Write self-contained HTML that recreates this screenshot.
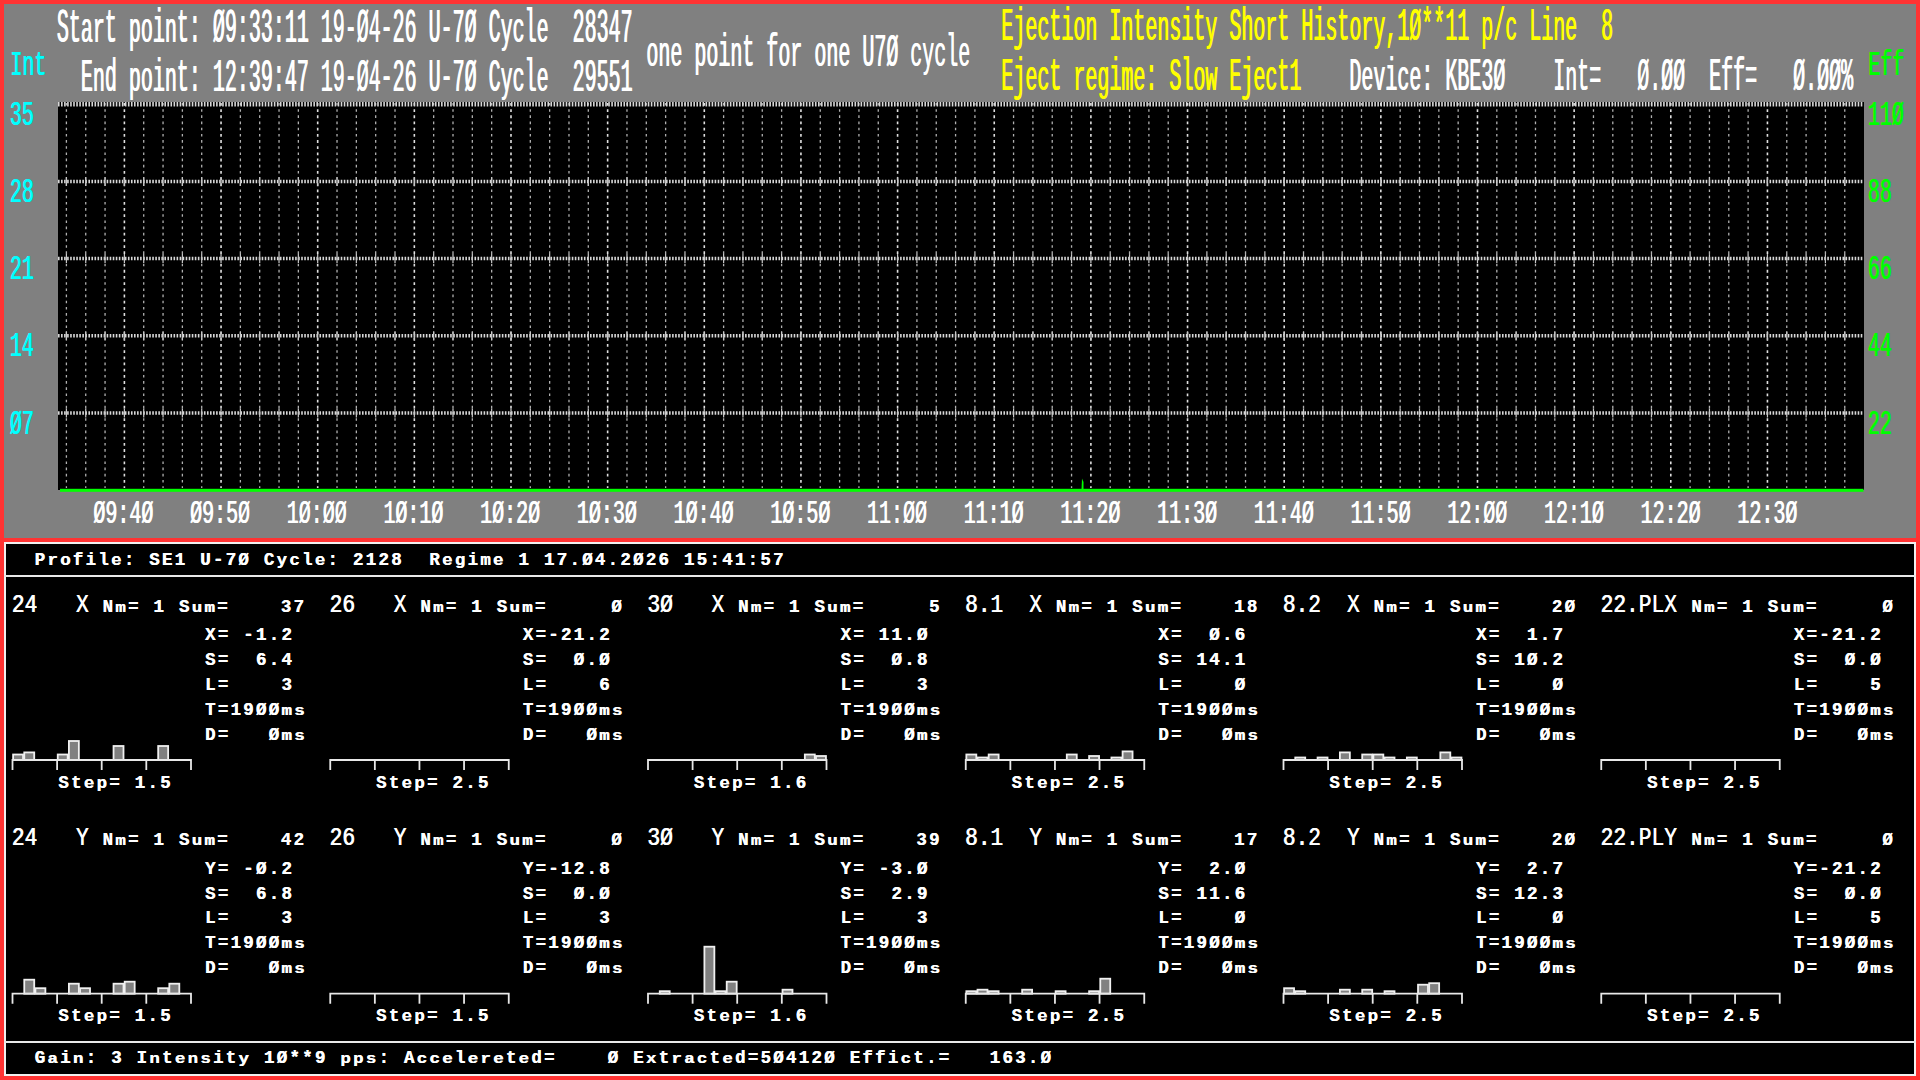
<!DOCTYPE html>
<html><head><meta charset="utf-8"><style>
html,body{margin:0;padding:0;width:1920px;height:1080px;overflow:hidden;background:#ff3333;}
.lc{display:inline-block;}
.t{position:absolute;white-space:pre;font-family:"Liberation Mono",monospace;transform-origin:0 0;}
#top{position:absolute;left:4px;top:4px;width:1912px;height:533.6px;background:#808080;}
#chart{position:absolute;left:58px;top:102px;width:1805.5px;height:388px;background:#000;}
#low{position:absolute;left:4px;top:542px;width:1908px;height:530px;border:2px solid #f0f0f0;background:#000;}
.sep{position:absolute;left:4px;width:1912px;height:2px;background:#e8e8e8;}
svg{position:absolute;left:0;top:0;}
.vd{stroke:#b0b0b0;stroke-width:1.3;stroke-dasharray:2.6 3.58;}
.vdb{stroke:#e0e0e0;stroke-width:1.6;stroke-dasharray:2.8 3.38;}
.im{stroke:#c8c8c8;stroke-width:1.2;}
.hd{stroke:#d8d8d8;stroke-width:3.5;stroke-dasharray:1.6 1.44;}
.bar{fill:#808080;stroke:#f0f0f0;stroke-width:1.8;}
.ax{fill:none;stroke:#e8e8e8;stroke-width:1.8;}
</style></head><body>
<div id="top"></div>
<div id="chart"></div>
<div id="low"></div>
<div class="sep" style="top:575px"></div>
<div class="sep" style="top:1041px"></div>
<svg width="1920" height="1080" viewBox="0 0 1920 1080">
<line x1="66.40" y1="103" x2="66.40" y2="488" class="vd"/><line x1="85.73" y1="103" x2="85.73" y2="488" class="vd"/><line x1="105.06" y1="103" x2="105.06" y2="488" class="vd"/><line x1="124.39" y1="103" x2="124.39" y2="488" class="vdb"/><line x1="143.72" y1="103" x2="143.72" y2="488" class="vd"/><line x1="163.05" y1="103" x2="163.05" y2="488" class="vd"/><line x1="182.38" y1="103" x2="182.38" y2="488" class="vd"/><line x1="201.71" y1="103" x2="201.71" y2="488" class="vd"/><line x1="221.04" y1="103" x2="221.04" y2="488" class="vdb"/><line x1="240.37" y1="103" x2="240.37" y2="488" class="vd"/><line x1="259.70" y1="103" x2="259.70" y2="488" class="vd"/><line x1="279.03" y1="103" x2="279.03" y2="488" class="vd"/><line x1="298.36" y1="103" x2="298.36" y2="488" class="vd"/><line x1="317.69" y1="103" x2="317.69" y2="488" class="vdb"/><line x1="337.02" y1="103" x2="337.02" y2="488" class="vd"/><line x1="356.35" y1="103" x2="356.35" y2="488" class="vd"/><line x1="375.68" y1="103" x2="375.68" y2="488" class="vd"/><line x1="395.01" y1="103" x2="395.01" y2="488" class="vd"/><line x1="414.34" y1="103" x2="414.34" y2="488" class="vdb"/><line x1="433.67" y1="103" x2="433.67" y2="488" class="vd"/><line x1="453.00" y1="103" x2="453.00" y2="488" class="vd"/><line x1="472.33" y1="103" x2="472.33" y2="488" class="vd"/><line x1="491.66" y1="103" x2="491.66" y2="488" class="vd"/><line x1="510.99" y1="103" x2="510.99" y2="488" class="vdb"/><line x1="530.32" y1="103" x2="530.32" y2="488" class="vd"/><line x1="549.65" y1="103" x2="549.65" y2="488" class="vd"/><line x1="568.98" y1="103" x2="568.98" y2="488" class="vd"/><line x1="588.31" y1="103" x2="588.31" y2="488" class="vd"/><line x1="607.64" y1="103" x2="607.64" y2="488" class="vdb"/><line x1="626.97" y1="103" x2="626.97" y2="488" class="vd"/><line x1="646.30" y1="103" x2="646.30" y2="488" class="vd"/><line x1="665.63" y1="103" x2="665.63" y2="488" class="vd"/><line x1="684.96" y1="103" x2="684.96" y2="488" class="vd"/><line x1="704.29" y1="103" x2="704.29" y2="488" class="vdb"/><line x1="723.62" y1="103" x2="723.62" y2="488" class="vd"/><line x1="742.95" y1="103" x2="742.95" y2="488" class="vd"/><line x1="762.28" y1="103" x2="762.28" y2="488" class="vd"/><line x1="781.61" y1="103" x2="781.61" y2="488" class="vd"/><line x1="800.94" y1="103" x2="800.94" y2="488" class="vdb"/><line x1="820.27" y1="103" x2="820.27" y2="488" class="vd"/><line x1="839.60" y1="103" x2="839.60" y2="488" class="vd"/><line x1="858.93" y1="103" x2="858.93" y2="488" class="vd"/><line x1="878.26" y1="103" x2="878.26" y2="488" class="vd"/><line x1="897.59" y1="103" x2="897.59" y2="488" class="vdb"/><line x1="916.92" y1="103" x2="916.92" y2="488" class="vd"/><line x1="936.25" y1="103" x2="936.25" y2="488" class="vd"/><line x1="955.58" y1="103" x2="955.58" y2="488" class="vd"/><line x1="974.91" y1="103" x2="974.91" y2="488" class="vd"/><line x1="994.24" y1="103" x2="994.24" y2="488" class="vdb"/><line x1="1013.57" y1="103" x2="1013.57" y2="488" class="vd"/><line x1="1032.90" y1="103" x2="1032.90" y2="488" class="vd"/><line x1="1052.23" y1="103" x2="1052.23" y2="488" class="vd"/><line x1="1071.56" y1="103" x2="1071.56" y2="488" class="vd"/><line x1="1090.89" y1="103" x2="1090.89" y2="488" class="vdb"/><line x1="1110.22" y1="103" x2="1110.22" y2="488" class="vd"/><line x1="1129.55" y1="103" x2="1129.55" y2="488" class="vd"/><line x1="1148.88" y1="103" x2="1148.88" y2="488" class="vd"/><line x1="1168.21" y1="103" x2="1168.21" y2="488" class="vd"/><line x1="1187.54" y1="103" x2="1187.54" y2="488" class="vdb"/><line x1="1206.87" y1="103" x2="1206.87" y2="488" class="vd"/><line x1="1226.20" y1="103" x2="1226.20" y2="488" class="vd"/><line x1="1245.53" y1="103" x2="1245.53" y2="488" class="vd"/><line x1="1264.86" y1="103" x2="1264.86" y2="488" class="vd"/><line x1="1284.19" y1="103" x2="1284.19" y2="488" class="vdb"/><line x1="1303.52" y1="103" x2="1303.52" y2="488" class="vd"/><line x1="1322.85" y1="103" x2="1322.85" y2="488" class="vd"/><line x1="1342.18" y1="103" x2="1342.18" y2="488" class="vd"/><line x1="1361.51" y1="103" x2="1361.51" y2="488" class="vd"/><line x1="1380.84" y1="103" x2="1380.84" y2="488" class="vdb"/><line x1="1400.17" y1="103" x2="1400.17" y2="488" class="vd"/><line x1="1419.50" y1="103" x2="1419.50" y2="488" class="vd"/><line x1="1438.83" y1="103" x2="1438.83" y2="488" class="vd"/><line x1="1458.16" y1="103" x2="1458.16" y2="488" class="vd"/><line x1="1477.49" y1="103" x2="1477.49" y2="488" class="vdb"/><line x1="1496.82" y1="103" x2="1496.82" y2="488" class="vd"/><line x1="1516.15" y1="103" x2="1516.15" y2="488" class="vd"/><line x1="1535.48" y1="103" x2="1535.48" y2="488" class="vd"/><line x1="1554.81" y1="103" x2="1554.81" y2="488" class="vd"/><line x1="1574.14" y1="103" x2="1574.14" y2="488" class="vdb"/><line x1="1593.47" y1="103" x2="1593.47" y2="488" class="vd"/><line x1="1612.80" y1="103" x2="1612.80" y2="488" class="vd"/><line x1="1632.13" y1="103" x2="1632.13" y2="488" class="vd"/><line x1="1651.46" y1="103" x2="1651.46" y2="488" class="vd"/><line x1="1670.79" y1="103" x2="1670.79" y2="488" class="vdb"/><line x1="1690.12" y1="103" x2="1690.12" y2="488" class="vd"/><line x1="1709.45" y1="103" x2="1709.45" y2="488" class="vd"/><line x1="1728.78" y1="103" x2="1728.78" y2="488" class="vd"/><line x1="1748.11" y1="103" x2="1748.11" y2="488" class="vd"/><line x1="1767.44" y1="103" x2="1767.44" y2="488" class="vdb"/><line x1="1786.77" y1="103" x2="1786.77" y2="488" class="vd"/><line x1="1806.10" y1="103" x2="1806.10" y2="488" class="vd"/><line x1="1825.43" y1="103" x2="1825.43" y2="488" class="vd"/><line x1="1844.76" y1="103" x2="1844.76" y2="488" class="vd"/><line x1="58" y1="104.20" x2="1863.5" y2="104.20" class="hd" style="stroke-width:4.5"/><line x1="58" y1="181.40" x2="1863.5" y2="181.40" class="hd"/><line x1="58" y1="258.60" x2="1863.5" y2="258.60" class="hd"/><line x1="58" y1="335.80" x2="1863.5" y2="335.80" class="hd"/><line x1="58" y1="413.00" x2="1863.5" y2="413.00" class="hd"/><line x1="66.40" y1="176.90" x2="66.40" y2="185.90" class="im"/><line x1="85.73" y1="176.90" x2="85.73" y2="185.90" class="im"/><line x1="105.06" y1="176.90" x2="105.06" y2="185.90" class="im"/><line x1="124.39" y1="176.90" x2="124.39" y2="185.90" class="im"/><line x1="143.72" y1="176.90" x2="143.72" y2="185.90" class="im"/><line x1="163.05" y1="176.90" x2="163.05" y2="185.90" class="im"/><line x1="182.38" y1="176.90" x2="182.38" y2="185.90" class="im"/><line x1="201.71" y1="176.90" x2="201.71" y2="185.90" class="im"/><line x1="221.04" y1="176.90" x2="221.04" y2="185.90" class="im"/><line x1="240.37" y1="176.90" x2="240.37" y2="185.90" class="im"/><line x1="259.70" y1="176.90" x2="259.70" y2="185.90" class="im"/><line x1="279.03" y1="176.90" x2="279.03" y2="185.90" class="im"/><line x1="298.36" y1="176.90" x2="298.36" y2="185.90" class="im"/><line x1="317.69" y1="176.90" x2="317.69" y2="185.90" class="im"/><line x1="337.02" y1="176.90" x2="337.02" y2="185.90" class="im"/><line x1="356.35" y1="176.90" x2="356.35" y2="185.90" class="im"/><line x1="375.68" y1="176.90" x2="375.68" y2="185.90" class="im"/><line x1="395.01" y1="176.90" x2="395.01" y2="185.90" class="im"/><line x1="414.34" y1="176.90" x2="414.34" y2="185.90" class="im"/><line x1="433.67" y1="176.90" x2="433.67" y2="185.90" class="im"/><line x1="453.00" y1="176.90" x2="453.00" y2="185.90" class="im"/><line x1="472.33" y1="176.90" x2="472.33" y2="185.90" class="im"/><line x1="491.66" y1="176.90" x2="491.66" y2="185.90" class="im"/><line x1="510.99" y1="176.90" x2="510.99" y2="185.90" class="im"/><line x1="530.32" y1="176.90" x2="530.32" y2="185.90" class="im"/><line x1="549.65" y1="176.90" x2="549.65" y2="185.90" class="im"/><line x1="568.98" y1="176.90" x2="568.98" y2="185.90" class="im"/><line x1="588.31" y1="176.90" x2="588.31" y2="185.90" class="im"/><line x1="607.64" y1="176.90" x2="607.64" y2="185.90" class="im"/><line x1="626.97" y1="176.90" x2="626.97" y2="185.90" class="im"/><line x1="646.30" y1="176.90" x2="646.30" y2="185.90" class="im"/><line x1="665.63" y1="176.90" x2="665.63" y2="185.90" class="im"/><line x1="684.96" y1="176.90" x2="684.96" y2="185.90" class="im"/><line x1="704.29" y1="176.90" x2="704.29" y2="185.90" class="im"/><line x1="723.62" y1="176.90" x2="723.62" y2="185.90" class="im"/><line x1="742.95" y1="176.90" x2="742.95" y2="185.90" class="im"/><line x1="762.28" y1="176.90" x2="762.28" y2="185.90" class="im"/><line x1="781.61" y1="176.90" x2="781.61" y2="185.90" class="im"/><line x1="800.94" y1="176.90" x2="800.94" y2="185.90" class="im"/><line x1="820.27" y1="176.90" x2="820.27" y2="185.90" class="im"/><line x1="839.60" y1="176.90" x2="839.60" y2="185.90" class="im"/><line x1="858.93" y1="176.90" x2="858.93" y2="185.90" class="im"/><line x1="878.26" y1="176.90" x2="878.26" y2="185.90" class="im"/><line x1="897.59" y1="176.90" x2="897.59" y2="185.90" class="im"/><line x1="916.92" y1="176.90" x2="916.92" y2="185.90" class="im"/><line x1="936.25" y1="176.90" x2="936.25" y2="185.90" class="im"/><line x1="955.58" y1="176.90" x2="955.58" y2="185.90" class="im"/><line x1="974.91" y1="176.90" x2="974.91" y2="185.90" class="im"/><line x1="994.24" y1="176.90" x2="994.24" y2="185.90" class="im"/><line x1="1013.57" y1="176.90" x2="1013.57" y2="185.90" class="im"/><line x1="1032.90" y1="176.90" x2="1032.90" y2="185.90" class="im"/><line x1="1052.23" y1="176.90" x2="1052.23" y2="185.90" class="im"/><line x1="1071.56" y1="176.90" x2="1071.56" y2="185.90" class="im"/><line x1="1090.89" y1="176.90" x2="1090.89" y2="185.90" class="im"/><line x1="1110.22" y1="176.90" x2="1110.22" y2="185.90" class="im"/><line x1="1129.55" y1="176.90" x2="1129.55" y2="185.90" class="im"/><line x1="1148.88" y1="176.90" x2="1148.88" y2="185.90" class="im"/><line x1="1168.21" y1="176.90" x2="1168.21" y2="185.90" class="im"/><line x1="1187.54" y1="176.90" x2="1187.54" y2="185.90" class="im"/><line x1="1206.87" y1="176.90" x2="1206.87" y2="185.90" class="im"/><line x1="1226.20" y1="176.90" x2="1226.20" y2="185.90" class="im"/><line x1="1245.53" y1="176.90" x2="1245.53" y2="185.90" class="im"/><line x1="1264.86" y1="176.90" x2="1264.86" y2="185.90" class="im"/><line x1="1284.19" y1="176.90" x2="1284.19" y2="185.90" class="im"/><line x1="1303.52" y1="176.90" x2="1303.52" y2="185.90" class="im"/><line x1="1322.85" y1="176.90" x2="1322.85" y2="185.90" class="im"/><line x1="1342.18" y1="176.90" x2="1342.18" y2="185.90" class="im"/><line x1="1361.51" y1="176.90" x2="1361.51" y2="185.90" class="im"/><line x1="1380.84" y1="176.90" x2="1380.84" y2="185.90" class="im"/><line x1="1400.17" y1="176.90" x2="1400.17" y2="185.90" class="im"/><line x1="1419.50" y1="176.90" x2="1419.50" y2="185.90" class="im"/><line x1="1438.83" y1="176.90" x2="1438.83" y2="185.90" class="im"/><line x1="1458.16" y1="176.90" x2="1458.16" y2="185.90" class="im"/><line x1="1477.49" y1="176.90" x2="1477.49" y2="185.90" class="im"/><line x1="1496.82" y1="176.90" x2="1496.82" y2="185.90" class="im"/><line x1="1516.15" y1="176.90" x2="1516.15" y2="185.90" class="im"/><line x1="1535.48" y1="176.90" x2="1535.48" y2="185.90" class="im"/><line x1="1554.81" y1="176.90" x2="1554.81" y2="185.90" class="im"/><line x1="1574.14" y1="176.90" x2="1574.14" y2="185.90" class="im"/><line x1="1593.47" y1="176.90" x2="1593.47" y2="185.90" class="im"/><line x1="1612.80" y1="176.90" x2="1612.80" y2="185.90" class="im"/><line x1="1632.13" y1="176.90" x2="1632.13" y2="185.90" class="im"/><line x1="1651.46" y1="176.90" x2="1651.46" y2="185.90" class="im"/><line x1="1670.79" y1="176.90" x2="1670.79" y2="185.90" class="im"/><line x1="1690.12" y1="176.90" x2="1690.12" y2="185.90" class="im"/><line x1="1709.45" y1="176.90" x2="1709.45" y2="185.90" class="im"/><line x1="1728.78" y1="176.90" x2="1728.78" y2="185.90" class="im"/><line x1="1748.11" y1="176.90" x2="1748.11" y2="185.90" class="im"/><line x1="1767.44" y1="176.90" x2="1767.44" y2="185.90" class="im"/><line x1="1786.77" y1="176.90" x2="1786.77" y2="185.90" class="im"/><line x1="1806.10" y1="176.90" x2="1806.10" y2="185.90" class="im"/><line x1="1825.43" y1="176.90" x2="1825.43" y2="185.90" class="im"/><line x1="1844.76" y1="176.90" x2="1844.76" y2="185.90" class="im"/><line x1="66.40" y1="254.10" x2="66.40" y2="263.10" class="im"/><line x1="85.73" y1="254.10" x2="85.73" y2="263.10" class="im"/><line x1="105.06" y1="254.10" x2="105.06" y2="263.10" class="im"/><line x1="124.39" y1="254.10" x2="124.39" y2="263.10" class="im"/><line x1="143.72" y1="254.10" x2="143.72" y2="263.10" class="im"/><line x1="163.05" y1="254.10" x2="163.05" y2="263.10" class="im"/><line x1="182.38" y1="254.10" x2="182.38" y2="263.10" class="im"/><line x1="201.71" y1="254.10" x2="201.71" y2="263.10" class="im"/><line x1="221.04" y1="254.10" x2="221.04" y2="263.10" class="im"/><line x1="240.37" y1="254.10" x2="240.37" y2="263.10" class="im"/><line x1="259.70" y1="254.10" x2="259.70" y2="263.10" class="im"/><line x1="279.03" y1="254.10" x2="279.03" y2="263.10" class="im"/><line x1="298.36" y1="254.10" x2="298.36" y2="263.10" class="im"/><line x1="317.69" y1="254.10" x2="317.69" y2="263.10" class="im"/><line x1="337.02" y1="254.10" x2="337.02" y2="263.10" class="im"/><line x1="356.35" y1="254.10" x2="356.35" y2="263.10" class="im"/><line x1="375.68" y1="254.10" x2="375.68" y2="263.10" class="im"/><line x1="395.01" y1="254.10" x2="395.01" y2="263.10" class="im"/><line x1="414.34" y1="254.10" x2="414.34" y2="263.10" class="im"/><line x1="433.67" y1="254.10" x2="433.67" y2="263.10" class="im"/><line x1="453.00" y1="254.10" x2="453.00" y2="263.10" class="im"/><line x1="472.33" y1="254.10" x2="472.33" y2="263.10" class="im"/><line x1="491.66" y1="254.10" x2="491.66" y2="263.10" class="im"/><line x1="510.99" y1="254.10" x2="510.99" y2="263.10" class="im"/><line x1="530.32" y1="254.10" x2="530.32" y2="263.10" class="im"/><line x1="549.65" y1="254.10" x2="549.65" y2="263.10" class="im"/><line x1="568.98" y1="254.10" x2="568.98" y2="263.10" class="im"/><line x1="588.31" y1="254.10" x2="588.31" y2="263.10" class="im"/><line x1="607.64" y1="254.10" x2="607.64" y2="263.10" class="im"/><line x1="626.97" y1="254.10" x2="626.97" y2="263.10" class="im"/><line x1="646.30" y1="254.10" x2="646.30" y2="263.10" class="im"/><line x1="665.63" y1="254.10" x2="665.63" y2="263.10" class="im"/><line x1="684.96" y1="254.10" x2="684.96" y2="263.10" class="im"/><line x1="704.29" y1="254.10" x2="704.29" y2="263.10" class="im"/><line x1="723.62" y1="254.10" x2="723.62" y2="263.10" class="im"/><line x1="742.95" y1="254.10" x2="742.95" y2="263.10" class="im"/><line x1="762.28" y1="254.10" x2="762.28" y2="263.10" class="im"/><line x1="781.61" y1="254.10" x2="781.61" y2="263.10" class="im"/><line x1="800.94" y1="254.10" x2="800.94" y2="263.10" class="im"/><line x1="820.27" y1="254.10" x2="820.27" y2="263.10" class="im"/><line x1="839.60" y1="254.10" x2="839.60" y2="263.10" class="im"/><line x1="858.93" y1="254.10" x2="858.93" y2="263.10" class="im"/><line x1="878.26" y1="254.10" x2="878.26" y2="263.10" class="im"/><line x1="897.59" y1="254.10" x2="897.59" y2="263.10" class="im"/><line x1="916.92" y1="254.10" x2="916.92" y2="263.10" class="im"/><line x1="936.25" y1="254.10" x2="936.25" y2="263.10" class="im"/><line x1="955.58" y1="254.10" x2="955.58" y2="263.10" class="im"/><line x1="974.91" y1="254.10" x2="974.91" y2="263.10" class="im"/><line x1="994.24" y1="254.10" x2="994.24" y2="263.10" class="im"/><line x1="1013.57" y1="254.10" x2="1013.57" y2="263.10" class="im"/><line x1="1032.90" y1="254.10" x2="1032.90" y2="263.10" class="im"/><line x1="1052.23" y1="254.10" x2="1052.23" y2="263.10" class="im"/><line x1="1071.56" y1="254.10" x2="1071.56" y2="263.10" class="im"/><line x1="1090.89" y1="254.10" x2="1090.89" y2="263.10" class="im"/><line x1="1110.22" y1="254.10" x2="1110.22" y2="263.10" class="im"/><line x1="1129.55" y1="254.10" x2="1129.55" y2="263.10" class="im"/><line x1="1148.88" y1="254.10" x2="1148.88" y2="263.10" class="im"/><line x1="1168.21" y1="254.10" x2="1168.21" y2="263.10" class="im"/><line x1="1187.54" y1="254.10" x2="1187.54" y2="263.10" class="im"/><line x1="1206.87" y1="254.10" x2="1206.87" y2="263.10" class="im"/><line x1="1226.20" y1="254.10" x2="1226.20" y2="263.10" class="im"/><line x1="1245.53" y1="254.10" x2="1245.53" y2="263.10" class="im"/><line x1="1264.86" y1="254.10" x2="1264.86" y2="263.10" class="im"/><line x1="1284.19" y1="254.10" x2="1284.19" y2="263.10" class="im"/><line x1="1303.52" y1="254.10" x2="1303.52" y2="263.10" class="im"/><line x1="1322.85" y1="254.10" x2="1322.85" y2="263.10" class="im"/><line x1="1342.18" y1="254.10" x2="1342.18" y2="263.10" class="im"/><line x1="1361.51" y1="254.10" x2="1361.51" y2="263.10" class="im"/><line x1="1380.84" y1="254.10" x2="1380.84" y2="263.10" class="im"/><line x1="1400.17" y1="254.10" x2="1400.17" y2="263.10" class="im"/><line x1="1419.50" y1="254.10" x2="1419.50" y2="263.10" class="im"/><line x1="1438.83" y1="254.10" x2="1438.83" y2="263.10" class="im"/><line x1="1458.16" y1="254.10" x2="1458.16" y2="263.10" class="im"/><line x1="1477.49" y1="254.10" x2="1477.49" y2="263.10" class="im"/><line x1="1496.82" y1="254.10" x2="1496.82" y2="263.10" class="im"/><line x1="1516.15" y1="254.10" x2="1516.15" y2="263.10" class="im"/><line x1="1535.48" y1="254.10" x2="1535.48" y2="263.10" class="im"/><line x1="1554.81" y1="254.10" x2="1554.81" y2="263.10" class="im"/><line x1="1574.14" y1="254.10" x2="1574.14" y2="263.10" class="im"/><line x1="1593.47" y1="254.10" x2="1593.47" y2="263.10" class="im"/><line x1="1612.80" y1="254.10" x2="1612.80" y2="263.10" class="im"/><line x1="1632.13" y1="254.10" x2="1632.13" y2="263.10" class="im"/><line x1="1651.46" y1="254.10" x2="1651.46" y2="263.10" class="im"/><line x1="1670.79" y1="254.10" x2="1670.79" y2="263.10" class="im"/><line x1="1690.12" y1="254.10" x2="1690.12" y2="263.10" class="im"/><line x1="1709.45" y1="254.10" x2="1709.45" y2="263.10" class="im"/><line x1="1728.78" y1="254.10" x2="1728.78" y2="263.10" class="im"/><line x1="1748.11" y1="254.10" x2="1748.11" y2="263.10" class="im"/><line x1="1767.44" y1="254.10" x2="1767.44" y2="263.10" class="im"/><line x1="1786.77" y1="254.10" x2="1786.77" y2="263.10" class="im"/><line x1="1806.10" y1="254.10" x2="1806.10" y2="263.10" class="im"/><line x1="1825.43" y1="254.10" x2="1825.43" y2="263.10" class="im"/><line x1="1844.76" y1="254.10" x2="1844.76" y2="263.10" class="im"/><line x1="66.40" y1="331.30" x2="66.40" y2="340.30" class="im"/><line x1="85.73" y1="331.30" x2="85.73" y2="340.30" class="im"/><line x1="105.06" y1="331.30" x2="105.06" y2="340.30" class="im"/><line x1="124.39" y1="331.30" x2="124.39" y2="340.30" class="im"/><line x1="143.72" y1="331.30" x2="143.72" y2="340.30" class="im"/><line x1="163.05" y1="331.30" x2="163.05" y2="340.30" class="im"/><line x1="182.38" y1="331.30" x2="182.38" y2="340.30" class="im"/><line x1="201.71" y1="331.30" x2="201.71" y2="340.30" class="im"/><line x1="221.04" y1="331.30" x2="221.04" y2="340.30" class="im"/><line x1="240.37" y1="331.30" x2="240.37" y2="340.30" class="im"/><line x1="259.70" y1="331.30" x2="259.70" y2="340.30" class="im"/><line x1="279.03" y1="331.30" x2="279.03" y2="340.30" class="im"/><line x1="298.36" y1="331.30" x2="298.36" y2="340.30" class="im"/><line x1="317.69" y1="331.30" x2="317.69" y2="340.30" class="im"/><line x1="337.02" y1="331.30" x2="337.02" y2="340.30" class="im"/><line x1="356.35" y1="331.30" x2="356.35" y2="340.30" class="im"/><line x1="375.68" y1="331.30" x2="375.68" y2="340.30" class="im"/><line x1="395.01" y1="331.30" x2="395.01" y2="340.30" class="im"/><line x1="414.34" y1="331.30" x2="414.34" y2="340.30" class="im"/><line x1="433.67" y1="331.30" x2="433.67" y2="340.30" class="im"/><line x1="453.00" y1="331.30" x2="453.00" y2="340.30" class="im"/><line x1="472.33" y1="331.30" x2="472.33" y2="340.30" class="im"/><line x1="491.66" y1="331.30" x2="491.66" y2="340.30" class="im"/><line x1="510.99" y1="331.30" x2="510.99" y2="340.30" class="im"/><line x1="530.32" y1="331.30" x2="530.32" y2="340.30" class="im"/><line x1="549.65" y1="331.30" x2="549.65" y2="340.30" class="im"/><line x1="568.98" y1="331.30" x2="568.98" y2="340.30" class="im"/><line x1="588.31" y1="331.30" x2="588.31" y2="340.30" class="im"/><line x1="607.64" y1="331.30" x2="607.64" y2="340.30" class="im"/><line x1="626.97" y1="331.30" x2="626.97" y2="340.30" class="im"/><line x1="646.30" y1="331.30" x2="646.30" y2="340.30" class="im"/><line x1="665.63" y1="331.30" x2="665.63" y2="340.30" class="im"/><line x1="684.96" y1="331.30" x2="684.96" y2="340.30" class="im"/><line x1="704.29" y1="331.30" x2="704.29" y2="340.30" class="im"/><line x1="723.62" y1="331.30" x2="723.62" y2="340.30" class="im"/><line x1="742.95" y1="331.30" x2="742.95" y2="340.30" class="im"/><line x1="762.28" y1="331.30" x2="762.28" y2="340.30" class="im"/><line x1="781.61" y1="331.30" x2="781.61" y2="340.30" class="im"/><line x1="800.94" y1="331.30" x2="800.94" y2="340.30" class="im"/><line x1="820.27" y1="331.30" x2="820.27" y2="340.30" class="im"/><line x1="839.60" y1="331.30" x2="839.60" y2="340.30" class="im"/><line x1="858.93" y1="331.30" x2="858.93" y2="340.30" class="im"/><line x1="878.26" y1="331.30" x2="878.26" y2="340.30" class="im"/><line x1="897.59" y1="331.30" x2="897.59" y2="340.30" class="im"/><line x1="916.92" y1="331.30" x2="916.92" y2="340.30" class="im"/><line x1="936.25" y1="331.30" x2="936.25" y2="340.30" class="im"/><line x1="955.58" y1="331.30" x2="955.58" y2="340.30" class="im"/><line x1="974.91" y1="331.30" x2="974.91" y2="340.30" class="im"/><line x1="994.24" y1="331.30" x2="994.24" y2="340.30" class="im"/><line x1="1013.57" y1="331.30" x2="1013.57" y2="340.30" class="im"/><line x1="1032.90" y1="331.30" x2="1032.90" y2="340.30" class="im"/><line x1="1052.23" y1="331.30" x2="1052.23" y2="340.30" class="im"/><line x1="1071.56" y1="331.30" x2="1071.56" y2="340.30" class="im"/><line x1="1090.89" y1="331.30" x2="1090.89" y2="340.30" class="im"/><line x1="1110.22" y1="331.30" x2="1110.22" y2="340.30" class="im"/><line x1="1129.55" y1="331.30" x2="1129.55" y2="340.30" class="im"/><line x1="1148.88" y1="331.30" x2="1148.88" y2="340.30" class="im"/><line x1="1168.21" y1="331.30" x2="1168.21" y2="340.30" class="im"/><line x1="1187.54" y1="331.30" x2="1187.54" y2="340.30" class="im"/><line x1="1206.87" y1="331.30" x2="1206.87" y2="340.30" class="im"/><line x1="1226.20" y1="331.30" x2="1226.20" y2="340.30" class="im"/><line x1="1245.53" y1="331.30" x2="1245.53" y2="340.30" class="im"/><line x1="1264.86" y1="331.30" x2="1264.86" y2="340.30" class="im"/><line x1="1284.19" y1="331.30" x2="1284.19" y2="340.30" class="im"/><line x1="1303.52" y1="331.30" x2="1303.52" y2="340.30" class="im"/><line x1="1322.85" y1="331.30" x2="1322.85" y2="340.30" class="im"/><line x1="1342.18" y1="331.30" x2="1342.18" y2="340.30" class="im"/><line x1="1361.51" y1="331.30" x2="1361.51" y2="340.30" class="im"/><line x1="1380.84" y1="331.30" x2="1380.84" y2="340.30" class="im"/><line x1="1400.17" y1="331.30" x2="1400.17" y2="340.30" class="im"/><line x1="1419.50" y1="331.30" x2="1419.50" y2="340.30" class="im"/><line x1="1438.83" y1="331.30" x2="1438.83" y2="340.30" class="im"/><line x1="1458.16" y1="331.30" x2="1458.16" y2="340.30" class="im"/><line x1="1477.49" y1="331.30" x2="1477.49" y2="340.30" class="im"/><line x1="1496.82" y1="331.30" x2="1496.82" y2="340.30" class="im"/><line x1="1516.15" y1="331.30" x2="1516.15" y2="340.30" class="im"/><line x1="1535.48" y1="331.30" x2="1535.48" y2="340.30" class="im"/><line x1="1554.81" y1="331.30" x2="1554.81" y2="340.30" class="im"/><line x1="1574.14" y1="331.30" x2="1574.14" y2="340.30" class="im"/><line x1="1593.47" y1="331.30" x2="1593.47" y2="340.30" class="im"/><line x1="1612.80" y1="331.30" x2="1612.80" y2="340.30" class="im"/><line x1="1632.13" y1="331.30" x2="1632.13" y2="340.30" class="im"/><line x1="1651.46" y1="331.30" x2="1651.46" y2="340.30" class="im"/><line x1="1670.79" y1="331.30" x2="1670.79" y2="340.30" class="im"/><line x1="1690.12" y1="331.30" x2="1690.12" y2="340.30" class="im"/><line x1="1709.45" y1="331.30" x2="1709.45" y2="340.30" class="im"/><line x1="1728.78" y1="331.30" x2="1728.78" y2="340.30" class="im"/><line x1="1748.11" y1="331.30" x2="1748.11" y2="340.30" class="im"/><line x1="1767.44" y1="331.30" x2="1767.44" y2="340.30" class="im"/><line x1="1786.77" y1="331.30" x2="1786.77" y2="340.30" class="im"/><line x1="1806.10" y1="331.30" x2="1806.10" y2="340.30" class="im"/><line x1="1825.43" y1="331.30" x2="1825.43" y2="340.30" class="im"/><line x1="1844.76" y1="331.30" x2="1844.76" y2="340.30" class="im"/><line x1="66.40" y1="408.50" x2="66.40" y2="417.50" class="im"/><line x1="85.73" y1="408.50" x2="85.73" y2="417.50" class="im"/><line x1="105.06" y1="408.50" x2="105.06" y2="417.50" class="im"/><line x1="124.39" y1="408.50" x2="124.39" y2="417.50" class="im"/><line x1="143.72" y1="408.50" x2="143.72" y2="417.50" class="im"/><line x1="163.05" y1="408.50" x2="163.05" y2="417.50" class="im"/><line x1="182.38" y1="408.50" x2="182.38" y2="417.50" class="im"/><line x1="201.71" y1="408.50" x2="201.71" y2="417.50" class="im"/><line x1="221.04" y1="408.50" x2="221.04" y2="417.50" class="im"/><line x1="240.37" y1="408.50" x2="240.37" y2="417.50" class="im"/><line x1="259.70" y1="408.50" x2="259.70" y2="417.50" class="im"/><line x1="279.03" y1="408.50" x2="279.03" y2="417.50" class="im"/><line x1="298.36" y1="408.50" x2="298.36" y2="417.50" class="im"/><line x1="317.69" y1="408.50" x2="317.69" y2="417.50" class="im"/><line x1="337.02" y1="408.50" x2="337.02" y2="417.50" class="im"/><line x1="356.35" y1="408.50" x2="356.35" y2="417.50" class="im"/><line x1="375.68" y1="408.50" x2="375.68" y2="417.50" class="im"/><line x1="395.01" y1="408.50" x2="395.01" y2="417.50" class="im"/><line x1="414.34" y1="408.50" x2="414.34" y2="417.50" class="im"/><line x1="433.67" y1="408.50" x2="433.67" y2="417.50" class="im"/><line x1="453.00" y1="408.50" x2="453.00" y2="417.50" class="im"/><line x1="472.33" y1="408.50" x2="472.33" y2="417.50" class="im"/><line x1="491.66" y1="408.50" x2="491.66" y2="417.50" class="im"/><line x1="510.99" y1="408.50" x2="510.99" y2="417.50" class="im"/><line x1="530.32" y1="408.50" x2="530.32" y2="417.50" class="im"/><line x1="549.65" y1="408.50" x2="549.65" y2="417.50" class="im"/><line x1="568.98" y1="408.50" x2="568.98" y2="417.50" class="im"/><line x1="588.31" y1="408.50" x2="588.31" y2="417.50" class="im"/><line x1="607.64" y1="408.50" x2="607.64" y2="417.50" class="im"/><line x1="626.97" y1="408.50" x2="626.97" y2="417.50" class="im"/><line x1="646.30" y1="408.50" x2="646.30" y2="417.50" class="im"/><line x1="665.63" y1="408.50" x2="665.63" y2="417.50" class="im"/><line x1="684.96" y1="408.50" x2="684.96" y2="417.50" class="im"/><line x1="704.29" y1="408.50" x2="704.29" y2="417.50" class="im"/><line x1="723.62" y1="408.50" x2="723.62" y2="417.50" class="im"/><line x1="742.95" y1="408.50" x2="742.95" y2="417.50" class="im"/><line x1="762.28" y1="408.50" x2="762.28" y2="417.50" class="im"/><line x1="781.61" y1="408.50" x2="781.61" y2="417.50" class="im"/><line x1="800.94" y1="408.50" x2="800.94" y2="417.50" class="im"/><line x1="820.27" y1="408.50" x2="820.27" y2="417.50" class="im"/><line x1="839.60" y1="408.50" x2="839.60" y2="417.50" class="im"/><line x1="858.93" y1="408.50" x2="858.93" y2="417.50" class="im"/><line x1="878.26" y1="408.50" x2="878.26" y2="417.50" class="im"/><line x1="897.59" y1="408.50" x2="897.59" y2="417.50" class="im"/><line x1="916.92" y1="408.50" x2="916.92" y2="417.50" class="im"/><line x1="936.25" y1="408.50" x2="936.25" y2="417.50" class="im"/><line x1="955.58" y1="408.50" x2="955.58" y2="417.50" class="im"/><line x1="974.91" y1="408.50" x2="974.91" y2="417.50" class="im"/><line x1="994.24" y1="408.50" x2="994.24" y2="417.50" class="im"/><line x1="1013.57" y1="408.50" x2="1013.57" y2="417.50" class="im"/><line x1="1032.90" y1="408.50" x2="1032.90" y2="417.50" class="im"/><line x1="1052.23" y1="408.50" x2="1052.23" y2="417.50" class="im"/><line x1="1071.56" y1="408.50" x2="1071.56" y2="417.50" class="im"/><line x1="1090.89" y1="408.50" x2="1090.89" y2="417.50" class="im"/><line x1="1110.22" y1="408.50" x2="1110.22" y2="417.50" class="im"/><line x1="1129.55" y1="408.50" x2="1129.55" y2="417.50" class="im"/><line x1="1148.88" y1="408.50" x2="1148.88" y2="417.50" class="im"/><line x1="1168.21" y1="408.50" x2="1168.21" y2="417.50" class="im"/><line x1="1187.54" y1="408.50" x2="1187.54" y2="417.50" class="im"/><line x1="1206.87" y1="408.50" x2="1206.87" y2="417.50" class="im"/><line x1="1226.20" y1="408.50" x2="1226.20" y2="417.50" class="im"/><line x1="1245.53" y1="408.50" x2="1245.53" y2="417.50" class="im"/><line x1="1264.86" y1="408.50" x2="1264.86" y2="417.50" class="im"/><line x1="1284.19" y1="408.50" x2="1284.19" y2="417.50" class="im"/><line x1="1303.52" y1="408.50" x2="1303.52" y2="417.50" class="im"/><line x1="1322.85" y1="408.50" x2="1322.85" y2="417.50" class="im"/><line x1="1342.18" y1="408.50" x2="1342.18" y2="417.50" class="im"/><line x1="1361.51" y1="408.50" x2="1361.51" y2="417.50" class="im"/><line x1="1380.84" y1="408.50" x2="1380.84" y2="417.50" class="im"/><line x1="1400.17" y1="408.50" x2="1400.17" y2="417.50" class="im"/><line x1="1419.50" y1="408.50" x2="1419.50" y2="417.50" class="im"/><line x1="1438.83" y1="408.50" x2="1438.83" y2="417.50" class="im"/><line x1="1458.16" y1="408.50" x2="1458.16" y2="417.50" class="im"/><line x1="1477.49" y1="408.50" x2="1477.49" y2="417.50" class="im"/><line x1="1496.82" y1="408.50" x2="1496.82" y2="417.50" class="im"/><line x1="1516.15" y1="408.50" x2="1516.15" y2="417.50" class="im"/><line x1="1535.48" y1="408.50" x2="1535.48" y2="417.50" class="im"/><line x1="1554.81" y1="408.50" x2="1554.81" y2="417.50" class="im"/><line x1="1574.14" y1="408.50" x2="1574.14" y2="417.50" class="im"/><line x1="1593.47" y1="408.50" x2="1593.47" y2="417.50" class="im"/><line x1="1612.80" y1="408.50" x2="1612.80" y2="417.50" class="im"/><line x1="1632.13" y1="408.50" x2="1632.13" y2="417.50" class="im"/><line x1="1651.46" y1="408.50" x2="1651.46" y2="417.50" class="im"/><line x1="1670.79" y1="408.50" x2="1670.79" y2="417.50" class="im"/><line x1="1690.12" y1="408.50" x2="1690.12" y2="417.50" class="im"/><line x1="1709.45" y1="408.50" x2="1709.45" y2="417.50" class="im"/><line x1="1728.78" y1="408.50" x2="1728.78" y2="417.50" class="im"/><line x1="1748.11" y1="408.50" x2="1748.11" y2="417.50" class="im"/><line x1="1767.44" y1="408.50" x2="1767.44" y2="417.50" class="im"/><line x1="1786.77" y1="408.50" x2="1786.77" y2="417.50" class="im"/><line x1="1806.10" y1="408.50" x2="1806.10" y2="417.50" class="im"/><line x1="1825.43" y1="408.50" x2="1825.43" y2="417.50" class="im"/><line x1="1844.76" y1="408.50" x2="1844.76" y2="417.50" class="im"/><rect x="60" y="488.8" width="1803.5" height="3" fill="#00ff00"/><path d="M1081.5 490 L1082 478.5 L1083.5 482 L1083.5 490 Z" fill="#00ff00"/>
<rect x="13.10" y="754.50" width="9.96" height="5.50" class="bar"/><rect x="24.26" y="752.40" width="9.96" height="7.60" class="bar"/><rect x="57.74" y="754.50" width="9.96" height="5.50" class="bar"/><rect x="68.90" y="741.00" width="9.96" height="19.00" class="bar"/><rect x="113.54" y="746.00" width="9.96" height="14.00" class="bar"/><rect x="158.18" y="746.00" width="9.96" height="14.00" class="bar"/><path d="M12.50 770.00 V760.00 H191.00 V770.00" class="ax"/><line x1="57.10" y1="760.00" x2="57.10" y2="770.00" class="ax"/><line x1="101.70" y1="760.00" x2="101.70" y2="770.00" class="ax"/><line x1="146.30" y1="760.00" x2="146.30" y2="770.00" class="ax"/><path d="M330.25 770.00 V760.00 H508.75 V770.00" class="ax"/><line x1="374.85" y1="760.00" x2="374.85" y2="770.00" class="ax"/><line x1="419.45" y1="760.00" x2="419.45" y2="770.00" class="ax"/><line x1="464.05" y1="760.00" x2="464.05" y2="770.00" class="ax"/><rect x="804.84" y="754.50" width="9.96" height="5.50" class="bar"/><rect x="816.00" y="756.00" width="9.96" height="4.00" class="bar"/><path d="M648.00 770.00 V760.00 H826.50 V770.00" class="ax"/><line x1="692.60" y1="760.00" x2="692.60" y2="770.00" class="ax"/><line x1="737.20" y1="760.00" x2="737.20" y2="770.00" class="ax"/><line x1="781.80" y1="760.00" x2="781.80" y2="770.00" class="ax"/><rect x="966.35" y="754.50" width="9.96" height="5.50" class="bar"/><rect x="977.51" y="757.50" width="9.96" height="2.50" class="bar"/><rect x="988.67" y="754.50" width="9.96" height="5.50" class="bar"/><rect x="1066.79" y="754.50" width="9.96" height="5.50" class="bar"/><rect x="1089.11" y="756.00" width="9.96" height="4.00" class="bar"/><rect x="1111.43" y="757.50" width="9.96" height="2.50" class="bar"/><rect x="1122.59" y="751.40" width="9.96" height="8.60" class="bar"/><path d="M965.75 770.00 V760.00 H1144.25 V770.00" class="ax"/><line x1="1010.35" y1="760.00" x2="1010.35" y2="770.00" class="ax"/><line x1="1054.95" y1="760.00" x2="1054.95" y2="770.00" class="ax"/><line x1="1099.55" y1="760.00" x2="1099.55" y2="770.00" class="ax"/><rect x="1295.26" y="757.50" width="9.96" height="2.50" class="bar"/><rect x="1317.58" y="757.50" width="9.96" height="2.50" class="bar"/><rect x="1339.90" y="752.40" width="9.96" height="7.60" class="bar"/><rect x="1362.22" y="754.50" width="9.96" height="5.50" class="bar"/><rect x="1373.38" y="754.50" width="9.96" height="5.50" class="bar"/><rect x="1384.54" y="757.50" width="9.96" height="2.50" class="bar"/><rect x="1406.86" y="757.50" width="9.96" height="2.50" class="bar"/><rect x="1440.34" y="752.40" width="9.96" height="7.60" class="bar"/><rect x="1451.50" y="757.50" width="9.96" height="2.50" class="bar"/><path d="M1283.50 770.00 V760.00 H1462.00 V770.00" class="ax"/><line x1="1328.10" y1="760.00" x2="1328.10" y2="770.00" class="ax"/><line x1="1372.70" y1="760.00" x2="1372.70" y2="770.00" class="ax"/><line x1="1417.30" y1="760.00" x2="1417.30" y2="770.00" class="ax"/><path d="M1601.25 770.00 V760.00 H1779.75 V770.00" class="ax"/><line x1="1645.85" y1="760.00" x2="1645.85" y2="770.00" class="ax"/><line x1="1690.45" y1="760.00" x2="1690.45" y2="770.00" class="ax"/><line x1="1735.05" y1="760.00" x2="1735.05" y2="770.00" class="ax"/><rect x="24.26" y="979.70" width="9.96" height="14.00" class="bar"/><rect x="35.42" y="988.20" width="9.96" height="5.50" class="bar"/><rect x="68.90" y="983.70" width="9.96" height="10.00" class="bar"/><rect x="80.06" y="988.20" width="9.96" height="5.50" class="bar"/><rect x="113.54" y="983.70" width="9.96" height="10.00" class="bar"/><rect x="124.70" y="981.70" width="9.96" height="12.00" class="bar"/><rect x="158.18" y="988.20" width="9.96" height="5.50" class="bar"/><rect x="169.34" y="983.70" width="9.96" height="10.00" class="bar"/><path d="M12.50 1003.70 V993.70 H191.00 V1003.70" class="ax"/><line x1="57.10" y1="993.70" x2="57.10" y2="1003.70" class="ax"/><line x1="101.70" y1="993.70" x2="101.70" y2="1003.70" class="ax"/><line x1="146.30" y1="993.70" x2="146.30" y2="1003.70" class="ax"/><path d="M330.25 1003.70 V993.70 H508.75 V1003.70" class="ax"/><line x1="374.85" y1="993.70" x2="374.85" y2="1003.70" class="ax"/><line x1="419.45" y1="993.70" x2="419.45" y2="1003.70" class="ax"/><line x1="464.05" y1="993.70" x2="464.05" y2="1003.70" class="ax"/><rect x="659.76" y="991.20" width="9.96" height="2.50" class="bar"/><rect x="704.40" y="946.70" width="9.96" height="47.00" class="bar"/><rect x="715.56" y="991.20" width="9.96" height="2.50" class="bar"/><rect x="726.72" y="981.70" width="9.96" height="12.00" class="bar"/><rect x="782.52" y="989.70" width="9.96" height="4.00" class="bar"/><path d="M648.00 1003.70 V993.70 H826.50 V1003.70" class="ax"/><line x1="692.60" y1="993.70" x2="692.60" y2="1003.70" class="ax"/><line x1="737.20" y1="993.70" x2="737.20" y2="1003.70" class="ax"/><line x1="781.80" y1="993.70" x2="781.80" y2="1003.70" class="ax"/><rect x="966.35" y="991.20" width="9.96" height="2.50" class="bar"/><rect x="977.51" y="989.70" width="9.96" height="4.00" class="bar"/><rect x="988.67" y="991.20" width="9.96" height="2.50" class="bar"/><rect x="1022.15" y="989.70" width="9.96" height="4.00" class="bar"/><rect x="1055.63" y="991.20" width="9.96" height="2.50" class="bar"/><rect x="1089.11" y="991.20" width="9.96" height="2.50" class="bar"/><rect x="1100.27" y="978.70" width="9.96" height="15.00" class="bar"/><path d="M965.75 1003.70 V993.70 H1144.25 V1003.70" class="ax"/><line x1="1010.35" y1="993.70" x2="1010.35" y2="1003.70" class="ax"/><line x1="1054.95" y1="993.70" x2="1054.95" y2="1003.70" class="ax"/><line x1="1099.55" y1="993.70" x2="1099.55" y2="1003.70" class="ax"/><rect x="1284.10" y="988.20" width="9.96" height="5.50" class="bar"/><rect x="1295.26" y="991.20" width="9.96" height="2.50" class="bar"/><rect x="1339.90" y="989.70" width="9.96" height="4.00" class="bar"/><rect x="1362.22" y="989.70" width="9.96" height="4.00" class="bar"/><rect x="1384.54" y="991.20" width="9.96" height="2.50" class="bar"/><rect x="1418.02" y="984.70" width="9.96" height="9.00" class="bar"/><rect x="1429.18" y="983.20" width="9.96" height="10.50" class="bar"/><path d="M1283.50 1003.70 V993.70 H1462.00 V1003.70" class="ax"/><line x1="1328.10" y1="993.70" x2="1328.10" y2="1003.70" class="ax"/><line x1="1372.70" y1="993.70" x2="1372.70" y2="1003.70" class="ax"/><line x1="1417.30" y1="993.70" x2="1417.30" y2="1003.70" class="ax"/><path d="M1601.25 1003.70 V993.70 H1779.75 V1003.70" class="ax"/><line x1="1645.85" y1="993.70" x2="1645.85" y2="1003.70" class="ax"/><line x1="1690.45" y1="993.70" x2="1690.45" y2="1003.70" class="ax"/><line x1="1735.05" y1="993.70" x2="1735.05" y2="1003.70" class="ax"/>
</svg>
<div class="t" style="left:56.50px;top:5.51px;font-size:19.997px;line-height:19.997px;transform:scaleY(2.3687);color:#fff;font-weight:normal;text-shadow:0.7px 0 0 currentColor;">St<span class="lc" style="transform:scaleY(0.9);transform-origin:0 15.32px">ar</span>t <span class="lc" style="transform:scaleY(0.9);transform-origin:0 15.32px">po</span>i<span class="lc" style="transform:scaleY(0.9);transform-origin:0 15.32px">n</span>t: Ø9:33:11 19-Ø4-26 U-7Ø C<span class="lc" style="transform:scaleY(0.9);transform-origin:0 15.32px">yc</span>l<span class="lc" style="transform:scaleY(0.9);transform-origin:0 15.32px">e</span>  28347</div>
<div class="t" style="left:80.50px;top:55.55px;font-size:19.997px;line-height:19.997px;transform:scaleY(2.3535);color:#fff;font-weight:normal;text-shadow:0.7px 0 0 currentColor;">E<span class="lc" style="transform:scaleY(0.9);transform-origin:0 15.32px">n</span>d <span class="lc" style="transform:scaleY(0.9);transform-origin:0 15.32px">po</span>i<span class="lc" style="transform:scaleY(0.9);transform-origin:0 15.32px">n</span>t: 12:39:47 19-Ø4-26 U-7Ø C<span class="lc" style="transform:scaleY(0.9);transform-origin:0 15.32px">yc</span>l<span class="lc" style="transform:scaleY(0.9);transform-origin:0 15.32px">e</span>  29551</div>
<div class="t" style="left:646.00px;top:30.55px;font-size:19.997px;line-height:19.997px;transform:scaleY(2.3535);color:#fff;font-weight:normal;text-shadow:0.7px 0 0 currentColor;"><span class="lc" style="transform:scaleY(0.9);transform-origin:0 15.32px">one</span> <span class="lc" style="transform:scaleY(0.9);transform-origin:0 15.32px">po</span>i<span class="lc" style="transform:scaleY(0.9);transform-origin:0 15.32px">n</span>t f<span class="lc" style="transform:scaleY(0.9);transform-origin:0 15.32px">or</span> <span class="lc" style="transform:scaleY(0.9);transform-origin:0 15.32px">one</span> U7Ø <span class="lc" style="transform:scaleY(0.9);transform-origin:0 15.32px">cyc</span>l<span class="lc" style="transform:scaleY(0.9);transform-origin:0 15.32px">e</span></div>
<div class="t" style="left:1001.00px;top:5.35px;font-size:19.997px;line-height:19.997px;transform:scaleY(2.3535);color:#ffff00;font-weight:normal;text-shadow:0.7px 0 0 currentColor;">Ej<span class="lc" style="transform:scaleY(0.9);transform-origin:0 15.32px">ec</span>ti<span class="lc" style="transform:scaleY(0.9);transform-origin:0 15.32px">on</span> I<span class="lc" style="transform:scaleY(0.9);transform-origin:0 15.32px">n</span>t<span class="lc" style="transform:scaleY(0.9);transform-origin:0 15.32px">ens</span>it<span class="lc" style="transform:scaleY(0.9);transform-origin:0 15.32px">y</span> Sh<span class="lc" style="transform:scaleY(0.9);transform-origin:0 15.32px">or</span>t Hi<span class="lc" style="transform:scaleY(0.9);transform-origin:0 15.32px">s</span>t<span class="lc" style="transform:scaleY(0.9);transform-origin:0 15.32px">ory</span>,1Ø**11 <span class="lc" style="transform:scaleY(0.9);transform-origin:0 15.32px">p</span>/<span class="lc" style="transform:scaleY(0.9);transform-origin:0 15.32px">c</span> Li<span class="lc" style="transform:scaleY(0.9);transform-origin:0 15.32px">ne</span>  8</div>
<div class="t" style="left:1001.00px;top:55.35px;font-size:19.997px;line-height:19.997px;transform:scaleY(2.3535);color:#ffff00;font-weight:normal;text-shadow:0.7px 0 0 currentColor;">Ej<span class="lc" style="transform:scaleY(0.9);transform-origin:0 15.32px">ec</span>t <span class="lc" style="transform:scaleY(0.9);transform-origin:0 15.32px">reg</span>i<span class="lc" style="transform:scaleY(0.9);transform-origin:0 15.32px">me</span>: Sl<span class="lc" style="transform:scaleY(0.9);transform-origin:0 15.32px">ow</span> Ej<span class="lc" style="transform:scaleY(0.9);transform-origin:0 15.32px">ec</span>t1</div>
<div class="t" style="left:1349.00px;top:55.35px;font-size:19.997px;line-height:19.997px;transform:scaleY(2.3535);color:#fff;font-weight:normal;text-shadow:0.7px 0 0 currentColor;">D<span class="lc" style="transform:scaleY(0.9);transform-origin:0 15.32px">ev</span>i<span class="lc" style="transform:scaleY(0.9);transform-origin:0 15.32px">ce</span>: KBE3Ø    I<span class="lc" style="transform:scaleY(0.9);transform-origin:0 15.32px">n</span>t=   Ø.ØØ  Eff=   Ø.ØØ%</div>
<div class="t" style="left:10.00px;top:49.33px;font-size:19.997px;line-height:19.997px;transform:scaleY(1.7082);color:#00ffff;font-weight:normal;text-shadow:0.7px 0 0 currentColor;">Int</div>
<div class="t" style="left:1868.00px;top:49.33px;font-size:19.997px;line-height:19.997px;transform:scaleY(1.7082);color:#00ff00;font-weight:normal;text-shadow:0.7px 0 0 currentColor;">Eff</div>
<div class="t" style="left:9.50px;top:98.83px;font-size:19.997px;line-height:19.997px;transform:scaleY(1.7082);color:#00ffff;font-weight:normal;text-shadow:0.7px 0 0 currentColor;">35</div>
<div class="t" style="left:1867.50px;top:98.83px;font-size:19.997px;line-height:19.997px;transform:scaleY(1.7082);color:#00ff00;font-weight:normal;text-shadow:0.7px 0 0 currentColor;">11Ø</div>
<div class="t" style="left:9.50px;top:176.03px;font-size:19.997px;line-height:19.997px;transform:scaleY(1.7082);color:#00ffff;font-weight:normal;text-shadow:0.7px 0 0 currentColor;">28</div>
<div class="t" style="left:1867.50px;top:176.03px;font-size:19.997px;line-height:19.997px;transform:scaleY(1.7082);color:#00ff00;font-weight:normal;text-shadow:0.7px 0 0 currentColor;">88</div>
<div class="t" style="left:9.50px;top:253.23px;font-size:19.997px;line-height:19.997px;transform:scaleY(1.7082);color:#00ffff;font-weight:normal;text-shadow:0.7px 0 0 currentColor;">21</div>
<div class="t" style="left:1867.50px;top:253.23px;font-size:19.997px;line-height:19.997px;transform:scaleY(1.7082);color:#00ff00;font-weight:normal;text-shadow:0.7px 0 0 currentColor;">66</div>
<div class="t" style="left:9.50px;top:330.43px;font-size:19.997px;line-height:19.997px;transform:scaleY(1.7082);color:#00ffff;font-weight:normal;text-shadow:0.7px 0 0 currentColor;">14</div>
<div class="t" style="left:1867.50px;top:330.43px;font-size:19.997px;line-height:19.997px;transform:scaleY(1.7082);color:#00ff00;font-weight:normal;text-shadow:0.7px 0 0 currentColor;">44</div>
<div class="t" style="left:9.50px;top:407.63px;font-size:19.997px;line-height:19.997px;transform:scaleY(1.7082);color:#00ffff;font-weight:normal;text-shadow:0.7px 0 0 currentColor;">Ø7</div>
<div class="t" style="left:1867.50px;top:407.63px;font-size:19.997px;line-height:19.997px;transform:scaleY(1.7082);color:#00ff00;font-weight:normal;text-shadow:0.7px 0 0 currentColor;">22</div>
<div class="t" style="left:93.00px;top:498.16px;font-size:19.997px;line-height:19.997px;transform:scaleY(1.6930);color:#fff;font-weight:normal;text-shadow:0.7px 0 0 currentColor;">Ø9:4Ø</div>
<div class="t" style="left:189.71px;top:498.16px;font-size:19.997px;line-height:19.997px;transform:scaleY(1.6930);color:#fff;font-weight:normal;text-shadow:0.7px 0 0 currentColor;">Ø9:5Ø</div>
<div class="t" style="left:286.42px;top:498.16px;font-size:19.997px;line-height:19.997px;transform:scaleY(1.6930);color:#fff;font-weight:normal;text-shadow:0.7px 0 0 currentColor;">1Ø:ØØ</div>
<div class="t" style="left:383.13px;top:498.16px;font-size:19.997px;line-height:19.997px;transform:scaleY(1.6930);color:#fff;font-weight:normal;text-shadow:0.7px 0 0 currentColor;">1Ø:1Ø</div>
<div class="t" style="left:479.84px;top:498.16px;font-size:19.997px;line-height:19.997px;transform:scaleY(1.6930);color:#fff;font-weight:normal;text-shadow:0.7px 0 0 currentColor;">1Ø:2Ø</div>
<div class="t" style="left:576.55px;top:498.16px;font-size:19.997px;line-height:19.997px;transform:scaleY(1.6930);color:#fff;font-weight:normal;text-shadow:0.7px 0 0 currentColor;">1Ø:3Ø</div>
<div class="t" style="left:673.26px;top:498.16px;font-size:19.997px;line-height:19.997px;transform:scaleY(1.6930);color:#fff;font-weight:normal;text-shadow:0.7px 0 0 currentColor;">1Ø:4Ø</div>
<div class="t" style="left:769.97px;top:498.16px;font-size:19.997px;line-height:19.997px;transform:scaleY(1.6930);color:#fff;font-weight:normal;text-shadow:0.7px 0 0 currentColor;">1Ø:5Ø</div>
<div class="t" style="left:866.68px;top:498.16px;font-size:19.997px;line-height:19.997px;transform:scaleY(1.6930);color:#fff;font-weight:normal;text-shadow:0.7px 0 0 currentColor;">11:ØØ</div>
<div class="t" style="left:963.39px;top:498.16px;font-size:19.997px;line-height:19.997px;transform:scaleY(1.6930);color:#fff;font-weight:normal;text-shadow:0.7px 0 0 currentColor;">11:1Ø</div>
<div class="t" style="left:1060.10px;top:498.16px;font-size:19.997px;line-height:19.997px;transform:scaleY(1.6930);color:#fff;font-weight:normal;text-shadow:0.7px 0 0 currentColor;">11:2Ø</div>
<div class="t" style="left:1156.81px;top:498.16px;font-size:19.997px;line-height:19.997px;transform:scaleY(1.6930);color:#fff;font-weight:normal;text-shadow:0.7px 0 0 currentColor;">11:3Ø</div>
<div class="t" style="left:1253.52px;top:498.16px;font-size:19.997px;line-height:19.997px;transform:scaleY(1.6930);color:#fff;font-weight:normal;text-shadow:0.7px 0 0 currentColor;">11:4Ø</div>
<div class="t" style="left:1350.23px;top:498.16px;font-size:19.997px;line-height:19.997px;transform:scaleY(1.6930);color:#fff;font-weight:normal;text-shadow:0.7px 0 0 currentColor;">11:5Ø</div>
<div class="t" style="left:1446.94px;top:498.16px;font-size:19.997px;line-height:19.997px;transform:scaleY(1.6930);color:#fff;font-weight:normal;text-shadow:0.7px 0 0 currentColor;">12:ØØ</div>
<div class="t" style="left:1543.65px;top:498.16px;font-size:19.997px;line-height:19.997px;transform:scaleY(1.6930);color:#fff;font-weight:normal;text-shadow:0.7px 0 0 currentColor;">12:1Ø</div>
<div class="t" style="left:1640.36px;top:498.16px;font-size:19.997px;line-height:19.997px;transform:scaleY(1.6930);color:#fff;font-weight:normal;text-shadow:0.7px 0 0 currentColor;">12:2Ø</div>
<div class="t" style="left:1737.07px;top:498.16px;font-size:19.997px;line-height:19.997px;transform:scaleY(1.6930);color:#fff;font-weight:normal;text-shadow:0.7px 0 0 currentColor;">12:3Ø</div>
<div class="t" style="left:11.44px;top:592.53px;font-size:21.247px;line-height:21.247px;transform:scaleY(1.2147);color:#fff;font-weight:normal;text-shadow:0.7px 0 0 currentColor;">24</div>
<div class="t" style="left:75.64px;top:592.53px;font-size:21.247px;line-height:21.247px;transform:scaleY(1.2147);color:#fff;font-weight:normal;text-shadow:0.7px 0 0 currentColor;">X</div>
<div class="t" style="left:102.42px;top:598.58px;font-size:17.500px;line-height:17.500px;transform:scaleY(1.0237);color:#fff;font-weight:bold;text-shadow:0.4px 0 0 currentColor;letter-spacing:2.228px;">N<span class="lc" style="transform:scaleY(0.85);transform-origin:0 13.41px">m</span>= 1 S<span class="lc" style="transform:scaleY(0.85);transform-origin:0 13.41px">um</span>=    37</div>
<div class="t" style="left:204.93px;top:626.98px;font-size:17.500px;line-height:17.500px;transform:scaleY(1.0237);color:#fff;font-weight:bold;text-shadow:0.4px 0 0 currentColor;letter-spacing:2.228px;">X= -1.2</div>
<div class="t" style="left:204.93px;top:651.88px;font-size:17.500px;line-height:17.500px;transform:scaleY(1.0237);color:#fff;font-weight:bold;text-shadow:0.4px 0 0 currentColor;letter-spacing:2.228px;">S=  6.4</div>
<div class="t" style="left:204.93px;top:676.78px;font-size:17.500px;line-height:17.500px;transform:scaleY(1.0237);color:#fff;font-weight:bold;text-shadow:0.4px 0 0 currentColor;letter-spacing:2.228px;">L=    3</div>
<div class="t" style="left:204.93px;top:701.68px;font-size:17.500px;line-height:17.500px;transform:scaleY(1.0237);color:#fff;font-weight:bold;text-shadow:0.4px 0 0 currentColor;letter-spacing:2.228px;">T=19ØØ<span class="lc" style="transform:scaleY(0.85);transform-origin:0 13.41px">ms</span></div>
<div class="t" style="left:204.93px;top:726.58px;font-size:17.500px;line-height:17.500px;transform:scaleY(1.0237);color:#fff;font-weight:bold;text-shadow:0.4px 0 0 currentColor;letter-spacing:2.228px;">D=   Ø<span class="lc" style="transform:scaleY(0.85);transform-origin:0 13.41px">ms</span></div>
<div class="t" style="left:58.23px;top:773.53px;font-size:17.500px;line-height:17.500px;transform:scaleY(1.0497);color:#fff;font-weight:bold;text-shadow:0.4px 0 0 currentColor;letter-spacing:2.228px;">St<span class="lc" style="transform:scaleY(0.85);transform-origin:0 13.41px">ep</span>= 1.5</div>
<div class="t" style="left:329.19px;top:592.53px;font-size:21.247px;line-height:21.247px;transform:scaleY(1.2147);color:#fff;font-weight:normal;text-shadow:0.7px 0 0 currentColor;">26</div>
<div class="t" style="left:393.39px;top:592.53px;font-size:21.247px;line-height:21.247px;transform:scaleY(1.2147);color:#fff;font-weight:normal;text-shadow:0.7px 0 0 currentColor;">X</div>
<div class="t" style="left:420.18px;top:598.58px;font-size:17.500px;line-height:17.500px;transform:scaleY(1.0237);color:#fff;font-weight:bold;text-shadow:0.4px 0 0 currentColor;letter-spacing:2.228px;">N<span class="lc" style="transform:scaleY(0.85);transform-origin:0 13.41px">m</span>= 1 S<span class="lc" style="transform:scaleY(0.85);transform-origin:0 13.41px">um</span>=     Ø</div>
<div class="t" style="left:522.67px;top:626.98px;font-size:17.500px;line-height:17.500px;transform:scaleY(1.0237);color:#fff;font-weight:bold;text-shadow:0.4px 0 0 currentColor;letter-spacing:2.228px;">X=-21.2</div>
<div class="t" style="left:522.67px;top:651.88px;font-size:17.500px;line-height:17.500px;transform:scaleY(1.0237);color:#fff;font-weight:bold;text-shadow:0.4px 0 0 currentColor;letter-spacing:2.228px;">S=  Ø.Ø</div>
<div class="t" style="left:522.67px;top:676.78px;font-size:17.500px;line-height:17.500px;transform:scaleY(1.0237);color:#fff;font-weight:bold;text-shadow:0.4px 0 0 currentColor;letter-spacing:2.228px;">L=    6</div>
<div class="t" style="left:522.67px;top:701.68px;font-size:17.500px;line-height:17.500px;transform:scaleY(1.0237);color:#fff;font-weight:bold;text-shadow:0.4px 0 0 currentColor;letter-spacing:2.228px;">T=19ØØ<span class="lc" style="transform:scaleY(0.85);transform-origin:0 13.41px">ms</span></div>
<div class="t" style="left:522.67px;top:726.58px;font-size:17.500px;line-height:17.500px;transform:scaleY(1.0237);color:#fff;font-weight:bold;text-shadow:0.4px 0 0 currentColor;letter-spacing:2.228px;">D=   Ø<span class="lc" style="transform:scaleY(0.85);transform-origin:0 13.41px">ms</span></div>
<div class="t" style="left:375.98px;top:773.53px;font-size:17.500px;line-height:17.500px;transform:scaleY(1.0497);color:#fff;font-weight:bold;text-shadow:0.4px 0 0 currentColor;letter-spacing:2.228px;">St<span class="lc" style="transform:scaleY(0.85);transform-origin:0 13.41px">ep</span>= 2.5</div>
<div class="t" style="left:646.94px;top:592.53px;font-size:21.247px;line-height:21.247px;transform:scaleY(1.2147);color:#fff;font-weight:normal;text-shadow:0.7px 0 0 currentColor;">3Ø</div>
<div class="t" style="left:711.14px;top:592.53px;font-size:21.247px;line-height:21.247px;transform:scaleY(1.2147);color:#fff;font-weight:normal;text-shadow:0.7px 0 0 currentColor;">X</div>
<div class="t" style="left:737.92px;top:598.58px;font-size:17.500px;line-height:17.500px;transform:scaleY(1.0237);color:#fff;font-weight:bold;text-shadow:0.4px 0 0 currentColor;letter-spacing:2.228px;">N<span class="lc" style="transform:scaleY(0.85);transform-origin:0 13.41px">m</span>= 1 S<span class="lc" style="transform:scaleY(0.85);transform-origin:0 13.41px">um</span>=     5</div>
<div class="t" style="left:840.42px;top:626.98px;font-size:17.500px;line-height:17.500px;transform:scaleY(1.0237);color:#fff;font-weight:bold;text-shadow:0.4px 0 0 currentColor;letter-spacing:2.228px;">X= 11.Ø</div>
<div class="t" style="left:840.42px;top:651.88px;font-size:17.500px;line-height:17.500px;transform:scaleY(1.0237);color:#fff;font-weight:bold;text-shadow:0.4px 0 0 currentColor;letter-spacing:2.228px;">S=  Ø.8</div>
<div class="t" style="left:840.42px;top:676.78px;font-size:17.500px;line-height:17.500px;transform:scaleY(1.0237);color:#fff;font-weight:bold;text-shadow:0.4px 0 0 currentColor;letter-spacing:2.228px;">L=    3</div>
<div class="t" style="left:840.42px;top:701.68px;font-size:17.500px;line-height:17.500px;transform:scaleY(1.0237);color:#fff;font-weight:bold;text-shadow:0.4px 0 0 currentColor;letter-spacing:2.228px;">T=19ØØ<span class="lc" style="transform:scaleY(0.85);transform-origin:0 13.41px">ms</span></div>
<div class="t" style="left:840.42px;top:726.58px;font-size:17.500px;line-height:17.500px;transform:scaleY(1.0237);color:#fff;font-weight:bold;text-shadow:0.4px 0 0 currentColor;letter-spacing:2.228px;">D=   Ø<span class="lc" style="transform:scaleY(0.85);transform-origin:0 13.41px">ms</span></div>
<div class="t" style="left:693.73px;top:773.53px;font-size:17.500px;line-height:17.500px;transform:scaleY(1.0497);color:#fff;font-weight:bold;text-shadow:0.4px 0 0 currentColor;letter-spacing:2.228px;">St<span class="lc" style="transform:scaleY(0.85);transform-origin:0 13.41px">ep</span>= 1.6</div>
<div class="t" style="left:964.69px;top:592.53px;font-size:21.247px;line-height:21.247px;transform:scaleY(1.2147);color:#fff;font-weight:normal;text-shadow:0.7px 0 0 currentColor;">8.1</div>
<div class="t" style="left:1028.89px;top:592.53px;font-size:21.247px;line-height:21.247px;transform:scaleY(1.2147);color:#fff;font-weight:normal;text-shadow:0.7px 0 0 currentColor;">X</div>
<div class="t" style="left:1055.67px;top:598.58px;font-size:17.500px;line-height:17.500px;transform:scaleY(1.0237);color:#fff;font-weight:bold;text-shadow:0.4px 0 0 currentColor;letter-spacing:2.228px;">N<span class="lc" style="transform:scaleY(0.85);transform-origin:0 13.41px">m</span>= 1 S<span class="lc" style="transform:scaleY(0.85);transform-origin:0 13.41px">um</span>=    18</div>
<div class="t" style="left:1158.17px;top:626.98px;font-size:17.500px;line-height:17.500px;transform:scaleY(1.0237);color:#fff;font-weight:bold;text-shadow:0.4px 0 0 currentColor;letter-spacing:2.228px;">X=  Ø.6</div>
<div class="t" style="left:1158.17px;top:651.88px;font-size:17.500px;line-height:17.500px;transform:scaleY(1.0237);color:#fff;font-weight:bold;text-shadow:0.4px 0 0 currentColor;letter-spacing:2.228px;">S= 14.1</div>
<div class="t" style="left:1158.17px;top:676.78px;font-size:17.500px;line-height:17.500px;transform:scaleY(1.0237);color:#fff;font-weight:bold;text-shadow:0.4px 0 0 currentColor;letter-spacing:2.228px;">L=    Ø</div>
<div class="t" style="left:1158.17px;top:701.68px;font-size:17.500px;line-height:17.500px;transform:scaleY(1.0237);color:#fff;font-weight:bold;text-shadow:0.4px 0 0 currentColor;letter-spacing:2.228px;">T=19ØØ<span class="lc" style="transform:scaleY(0.85);transform-origin:0 13.41px">ms</span></div>
<div class="t" style="left:1158.17px;top:726.58px;font-size:17.500px;line-height:17.500px;transform:scaleY(1.0237);color:#fff;font-weight:bold;text-shadow:0.4px 0 0 currentColor;letter-spacing:2.228px;">D=   Ø<span class="lc" style="transform:scaleY(0.85);transform-origin:0 13.41px">ms</span></div>
<div class="t" style="left:1011.48px;top:773.53px;font-size:17.500px;line-height:17.500px;transform:scaleY(1.0497);color:#fff;font-weight:bold;text-shadow:0.4px 0 0 currentColor;letter-spacing:2.228px;">St<span class="lc" style="transform:scaleY(0.85);transform-origin:0 13.41px">ep</span>= 2.5</div>
<div class="t" style="left:1282.44px;top:592.53px;font-size:21.247px;line-height:21.247px;transform:scaleY(1.2147);color:#fff;font-weight:normal;text-shadow:0.7px 0 0 currentColor;">8.2</div>
<div class="t" style="left:1346.64px;top:592.53px;font-size:21.247px;line-height:21.247px;transform:scaleY(1.2147);color:#fff;font-weight:normal;text-shadow:0.7px 0 0 currentColor;">X</div>
<div class="t" style="left:1373.42px;top:598.58px;font-size:17.500px;line-height:17.500px;transform:scaleY(1.0237);color:#fff;font-weight:bold;text-shadow:0.4px 0 0 currentColor;letter-spacing:2.228px;">N<span class="lc" style="transform:scaleY(0.85);transform-origin:0 13.41px">m</span>= 1 S<span class="lc" style="transform:scaleY(0.85);transform-origin:0 13.41px">um</span>=    2Ø</div>
<div class="t" style="left:1475.92px;top:626.98px;font-size:17.500px;line-height:17.500px;transform:scaleY(1.0237);color:#fff;font-weight:bold;text-shadow:0.4px 0 0 currentColor;letter-spacing:2.228px;">X=  1.7</div>
<div class="t" style="left:1475.92px;top:651.88px;font-size:17.500px;line-height:17.500px;transform:scaleY(1.0237);color:#fff;font-weight:bold;text-shadow:0.4px 0 0 currentColor;letter-spacing:2.228px;">S= 1Ø.2</div>
<div class="t" style="left:1475.92px;top:676.78px;font-size:17.500px;line-height:17.500px;transform:scaleY(1.0237);color:#fff;font-weight:bold;text-shadow:0.4px 0 0 currentColor;letter-spacing:2.228px;">L=    Ø</div>
<div class="t" style="left:1475.92px;top:701.68px;font-size:17.500px;line-height:17.500px;transform:scaleY(1.0237);color:#fff;font-weight:bold;text-shadow:0.4px 0 0 currentColor;letter-spacing:2.228px;">T=19ØØ<span class="lc" style="transform:scaleY(0.85);transform-origin:0 13.41px">ms</span></div>
<div class="t" style="left:1475.92px;top:726.58px;font-size:17.500px;line-height:17.500px;transform:scaleY(1.0237);color:#fff;font-weight:bold;text-shadow:0.4px 0 0 currentColor;letter-spacing:2.228px;">D=   Ø<span class="lc" style="transform:scaleY(0.85);transform-origin:0 13.41px">ms</span></div>
<div class="t" style="left:1329.22px;top:773.53px;font-size:17.500px;line-height:17.500px;transform:scaleY(1.0497);color:#fff;font-weight:bold;text-shadow:0.4px 0 0 currentColor;letter-spacing:2.228px;">St<span class="lc" style="transform:scaleY(0.85);transform-origin:0 13.41px">ep</span>= 2.5</div>
<div class="t" style="left:1600.19px;top:592.53px;font-size:21.247px;line-height:21.247px;transform:scaleY(1.2147);color:#fff;font-weight:normal;text-shadow:0.7px 0 0 currentColor;">22.PLX</div>
<div class="t" style="left:1691.17px;top:598.58px;font-size:17.500px;line-height:17.500px;transform:scaleY(1.0237);color:#fff;font-weight:bold;text-shadow:0.4px 0 0 currentColor;letter-spacing:2.228px;">N<span class="lc" style="transform:scaleY(0.85);transform-origin:0 13.41px">m</span>= 1 S<span class="lc" style="transform:scaleY(0.85);transform-origin:0 13.41px">um</span>=     Ø</div>
<div class="t" style="left:1793.67px;top:626.98px;font-size:17.500px;line-height:17.500px;transform:scaleY(1.0237);color:#fff;font-weight:bold;text-shadow:0.4px 0 0 currentColor;letter-spacing:2.228px;">X=-21.2</div>
<div class="t" style="left:1793.67px;top:651.88px;font-size:17.500px;line-height:17.500px;transform:scaleY(1.0237);color:#fff;font-weight:bold;text-shadow:0.4px 0 0 currentColor;letter-spacing:2.228px;">S=  Ø.Ø</div>
<div class="t" style="left:1793.67px;top:676.78px;font-size:17.500px;line-height:17.500px;transform:scaleY(1.0237);color:#fff;font-weight:bold;text-shadow:0.4px 0 0 currentColor;letter-spacing:2.228px;">L=    5</div>
<div class="t" style="left:1793.67px;top:701.68px;font-size:17.500px;line-height:17.500px;transform:scaleY(1.0237);color:#fff;font-weight:bold;text-shadow:0.4px 0 0 currentColor;letter-spacing:2.228px;">T=19ØØ<span class="lc" style="transform:scaleY(0.85);transform-origin:0 13.41px">ms</span></div>
<div class="t" style="left:1793.67px;top:726.58px;font-size:17.500px;line-height:17.500px;transform:scaleY(1.0237);color:#fff;font-weight:bold;text-shadow:0.4px 0 0 currentColor;letter-spacing:2.228px;">D=   Ø<span class="lc" style="transform:scaleY(0.85);transform-origin:0 13.41px">ms</span></div>
<div class="t" style="left:1646.97px;top:773.53px;font-size:17.500px;line-height:17.500px;transform:scaleY(1.0497);color:#fff;font-weight:bold;text-shadow:0.4px 0 0 currentColor;letter-spacing:2.228px;">St<span class="lc" style="transform:scaleY(0.85);transform-origin:0 13.41px">ep</span>= 2.5</div>
<div class="t" style="left:11.44px;top:826.23px;font-size:21.247px;line-height:21.247px;transform:scaleY(1.2147);color:#fff;font-weight:normal;text-shadow:0.7px 0 0 currentColor;">24</div>
<div class="t" style="left:75.64px;top:826.23px;font-size:21.247px;line-height:21.247px;transform:scaleY(1.2147);color:#fff;font-weight:normal;text-shadow:0.7px 0 0 currentColor;">Y</div>
<div class="t" style="left:102.42px;top:832.28px;font-size:17.500px;line-height:17.500px;transform:scaleY(1.0237);color:#fff;font-weight:bold;text-shadow:0.4px 0 0 currentColor;letter-spacing:2.228px;">N<span class="lc" style="transform:scaleY(0.85);transform-origin:0 13.41px">m</span>= 1 S<span class="lc" style="transform:scaleY(0.85);transform-origin:0 13.41px">um</span>=    42</div>
<div class="t" style="left:204.93px;top:860.68px;font-size:17.500px;line-height:17.500px;transform:scaleY(1.0237);color:#fff;font-weight:bold;text-shadow:0.4px 0 0 currentColor;letter-spacing:2.228px;">Y= -Ø.2</div>
<div class="t" style="left:204.93px;top:885.58px;font-size:17.500px;line-height:17.500px;transform:scaleY(1.0237);color:#fff;font-weight:bold;text-shadow:0.4px 0 0 currentColor;letter-spacing:2.228px;">S=  6.8</div>
<div class="t" style="left:204.93px;top:910.48px;font-size:17.500px;line-height:17.500px;transform:scaleY(1.0237);color:#fff;font-weight:bold;text-shadow:0.4px 0 0 currentColor;letter-spacing:2.228px;">L=    3</div>
<div class="t" style="left:204.93px;top:935.38px;font-size:17.500px;line-height:17.500px;transform:scaleY(1.0237);color:#fff;font-weight:bold;text-shadow:0.4px 0 0 currentColor;letter-spacing:2.228px;">T=19ØØ<span class="lc" style="transform:scaleY(0.85);transform-origin:0 13.41px">ms</span></div>
<div class="t" style="left:204.93px;top:960.28px;font-size:17.500px;line-height:17.500px;transform:scaleY(1.0237);color:#fff;font-weight:bold;text-shadow:0.4px 0 0 currentColor;letter-spacing:2.228px;">D=   Ø<span class="lc" style="transform:scaleY(0.85);transform-origin:0 13.41px">ms</span></div>
<div class="t" style="left:58.23px;top:1007.23px;font-size:17.500px;line-height:17.500px;transform:scaleY(1.0497);color:#fff;font-weight:bold;text-shadow:0.4px 0 0 currentColor;letter-spacing:2.228px;">St<span class="lc" style="transform:scaleY(0.85);transform-origin:0 13.41px">ep</span>= 1.5</div>
<div class="t" style="left:329.19px;top:826.23px;font-size:21.247px;line-height:21.247px;transform:scaleY(1.2147);color:#fff;font-weight:normal;text-shadow:0.7px 0 0 currentColor;">26</div>
<div class="t" style="left:393.39px;top:826.23px;font-size:21.247px;line-height:21.247px;transform:scaleY(1.2147);color:#fff;font-weight:normal;text-shadow:0.7px 0 0 currentColor;">Y</div>
<div class="t" style="left:420.18px;top:832.28px;font-size:17.500px;line-height:17.500px;transform:scaleY(1.0237);color:#fff;font-weight:bold;text-shadow:0.4px 0 0 currentColor;letter-spacing:2.228px;">N<span class="lc" style="transform:scaleY(0.85);transform-origin:0 13.41px">m</span>= 1 S<span class="lc" style="transform:scaleY(0.85);transform-origin:0 13.41px">um</span>=     Ø</div>
<div class="t" style="left:522.67px;top:860.68px;font-size:17.500px;line-height:17.500px;transform:scaleY(1.0237);color:#fff;font-weight:bold;text-shadow:0.4px 0 0 currentColor;letter-spacing:2.228px;">Y=-12.8</div>
<div class="t" style="left:522.67px;top:885.58px;font-size:17.500px;line-height:17.500px;transform:scaleY(1.0237);color:#fff;font-weight:bold;text-shadow:0.4px 0 0 currentColor;letter-spacing:2.228px;">S=  Ø.Ø</div>
<div class="t" style="left:522.67px;top:910.48px;font-size:17.500px;line-height:17.500px;transform:scaleY(1.0237);color:#fff;font-weight:bold;text-shadow:0.4px 0 0 currentColor;letter-spacing:2.228px;">L=    3</div>
<div class="t" style="left:522.67px;top:935.38px;font-size:17.500px;line-height:17.500px;transform:scaleY(1.0237);color:#fff;font-weight:bold;text-shadow:0.4px 0 0 currentColor;letter-spacing:2.228px;">T=19ØØ<span class="lc" style="transform:scaleY(0.85);transform-origin:0 13.41px">ms</span></div>
<div class="t" style="left:522.67px;top:960.28px;font-size:17.500px;line-height:17.500px;transform:scaleY(1.0237);color:#fff;font-weight:bold;text-shadow:0.4px 0 0 currentColor;letter-spacing:2.228px;">D=   Ø<span class="lc" style="transform:scaleY(0.85);transform-origin:0 13.41px">ms</span></div>
<div class="t" style="left:375.98px;top:1007.23px;font-size:17.500px;line-height:17.500px;transform:scaleY(1.0497);color:#fff;font-weight:bold;text-shadow:0.4px 0 0 currentColor;letter-spacing:2.228px;">St<span class="lc" style="transform:scaleY(0.85);transform-origin:0 13.41px">ep</span>= 1.5</div>
<div class="t" style="left:646.94px;top:826.23px;font-size:21.247px;line-height:21.247px;transform:scaleY(1.2147);color:#fff;font-weight:normal;text-shadow:0.7px 0 0 currentColor;">3Ø</div>
<div class="t" style="left:711.14px;top:826.23px;font-size:21.247px;line-height:21.247px;transform:scaleY(1.2147);color:#fff;font-weight:normal;text-shadow:0.7px 0 0 currentColor;">Y</div>
<div class="t" style="left:737.92px;top:832.28px;font-size:17.500px;line-height:17.500px;transform:scaleY(1.0237);color:#fff;font-weight:bold;text-shadow:0.4px 0 0 currentColor;letter-spacing:2.228px;">N<span class="lc" style="transform:scaleY(0.85);transform-origin:0 13.41px">m</span>= 1 S<span class="lc" style="transform:scaleY(0.85);transform-origin:0 13.41px">um</span>=    39</div>
<div class="t" style="left:840.42px;top:860.68px;font-size:17.500px;line-height:17.500px;transform:scaleY(1.0237);color:#fff;font-weight:bold;text-shadow:0.4px 0 0 currentColor;letter-spacing:2.228px;">Y= -3.Ø</div>
<div class="t" style="left:840.42px;top:885.58px;font-size:17.500px;line-height:17.500px;transform:scaleY(1.0237);color:#fff;font-weight:bold;text-shadow:0.4px 0 0 currentColor;letter-spacing:2.228px;">S=  2.9</div>
<div class="t" style="left:840.42px;top:910.48px;font-size:17.500px;line-height:17.500px;transform:scaleY(1.0237);color:#fff;font-weight:bold;text-shadow:0.4px 0 0 currentColor;letter-spacing:2.228px;">L=    3</div>
<div class="t" style="left:840.42px;top:935.38px;font-size:17.500px;line-height:17.500px;transform:scaleY(1.0237);color:#fff;font-weight:bold;text-shadow:0.4px 0 0 currentColor;letter-spacing:2.228px;">T=19ØØ<span class="lc" style="transform:scaleY(0.85);transform-origin:0 13.41px">ms</span></div>
<div class="t" style="left:840.42px;top:960.28px;font-size:17.500px;line-height:17.500px;transform:scaleY(1.0237);color:#fff;font-weight:bold;text-shadow:0.4px 0 0 currentColor;letter-spacing:2.228px;">D=   Ø<span class="lc" style="transform:scaleY(0.85);transform-origin:0 13.41px">ms</span></div>
<div class="t" style="left:693.73px;top:1007.23px;font-size:17.500px;line-height:17.500px;transform:scaleY(1.0497);color:#fff;font-weight:bold;text-shadow:0.4px 0 0 currentColor;letter-spacing:2.228px;">St<span class="lc" style="transform:scaleY(0.85);transform-origin:0 13.41px">ep</span>= 1.6</div>
<div class="t" style="left:964.69px;top:826.23px;font-size:21.247px;line-height:21.247px;transform:scaleY(1.2147);color:#fff;font-weight:normal;text-shadow:0.7px 0 0 currentColor;">8.1</div>
<div class="t" style="left:1028.89px;top:826.23px;font-size:21.247px;line-height:21.247px;transform:scaleY(1.2147);color:#fff;font-weight:normal;text-shadow:0.7px 0 0 currentColor;">Y</div>
<div class="t" style="left:1055.67px;top:832.28px;font-size:17.500px;line-height:17.500px;transform:scaleY(1.0237);color:#fff;font-weight:bold;text-shadow:0.4px 0 0 currentColor;letter-spacing:2.228px;">N<span class="lc" style="transform:scaleY(0.85);transform-origin:0 13.41px">m</span>= 1 S<span class="lc" style="transform:scaleY(0.85);transform-origin:0 13.41px">um</span>=    17</div>
<div class="t" style="left:1158.17px;top:860.68px;font-size:17.500px;line-height:17.500px;transform:scaleY(1.0237);color:#fff;font-weight:bold;text-shadow:0.4px 0 0 currentColor;letter-spacing:2.228px;">Y=  2.Ø</div>
<div class="t" style="left:1158.17px;top:885.58px;font-size:17.500px;line-height:17.500px;transform:scaleY(1.0237);color:#fff;font-weight:bold;text-shadow:0.4px 0 0 currentColor;letter-spacing:2.228px;">S= 11.6</div>
<div class="t" style="left:1158.17px;top:910.48px;font-size:17.500px;line-height:17.500px;transform:scaleY(1.0237);color:#fff;font-weight:bold;text-shadow:0.4px 0 0 currentColor;letter-spacing:2.228px;">L=    Ø</div>
<div class="t" style="left:1158.17px;top:935.38px;font-size:17.500px;line-height:17.500px;transform:scaleY(1.0237);color:#fff;font-weight:bold;text-shadow:0.4px 0 0 currentColor;letter-spacing:2.228px;">T=19ØØ<span class="lc" style="transform:scaleY(0.85);transform-origin:0 13.41px">ms</span></div>
<div class="t" style="left:1158.17px;top:960.28px;font-size:17.500px;line-height:17.500px;transform:scaleY(1.0237);color:#fff;font-weight:bold;text-shadow:0.4px 0 0 currentColor;letter-spacing:2.228px;">D=   Ø<span class="lc" style="transform:scaleY(0.85);transform-origin:0 13.41px">ms</span></div>
<div class="t" style="left:1011.48px;top:1007.23px;font-size:17.500px;line-height:17.500px;transform:scaleY(1.0497);color:#fff;font-weight:bold;text-shadow:0.4px 0 0 currentColor;letter-spacing:2.228px;">St<span class="lc" style="transform:scaleY(0.85);transform-origin:0 13.41px">ep</span>= 2.5</div>
<div class="t" style="left:1282.44px;top:826.23px;font-size:21.247px;line-height:21.247px;transform:scaleY(1.2147);color:#fff;font-weight:normal;text-shadow:0.7px 0 0 currentColor;">8.2</div>
<div class="t" style="left:1346.64px;top:826.23px;font-size:21.247px;line-height:21.247px;transform:scaleY(1.2147);color:#fff;font-weight:normal;text-shadow:0.7px 0 0 currentColor;">Y</div>
<div class="t" style="left:1373.42px;top:832.28px;font-size:17.500px;line-height:17.500px;transform:scaleY(1.0237);color:#fff;font-weight:bold;text-shadow:0.4px 0 0 currentColor;letter-spacing:2.228px;">N<span class="lc" style="transform:scaleY(0.85);transform-origin:0 13.41px">m</span>= 1 S<span class="lc" style="transform:scaleY(0.85);transform-origin:0 13.41px">um</span>=    2Ø</div>
<div class="t" style="left:1475.92px;top:860.68px;font-size:17.500px;line-height:17.500px;transform:scaleY(1.0237);color:#fff;font-weight:bold;text-shadow:0.4px 0 0 currentColor;letter-spacing:2.228px;">Y=  2.7</div>
<div class="t" style="left:1475.92px;top:885.58px;font-size:17.500px;line-height:17.500px;transform:scaleY(1.0237);color:#fff;font-weight:bold;text-shadow:0.4px 0 0 currentColor;letter-spacing:2.228px;">S= 12.3</div>
<div class="t" style="left:1475.92px;top:910.48px;font-size:17.500px;line-height:17.500px;transform:scaleY(1.0237);color:#fff;font-weight:bold;text-shadow:0.4px 0 0 currentColor;letter-spacing:2.228px;">L=    Ø</div>
<div class="t" style="left:1475.92px;top:935.38px;font-size:17.500px;line-height:17.500px;transform:scaleY(1.0237);color:#fff;font-weight:bold;text-shadow:0.4px 0 0 currentColor;letter-spacing:2.228px;">T=19ØØ<span class="lc" style="transform:scaleY(0.85);transform-origin:0 13.41px">ms</span></div>
<div class="t" style="left:1475.92px;top:960.28px;font-size:17.500px;line-height:17.500px;transform:scaleY(1.0237);color:#fff;font-weight:bold;text-shadow:0.4px 0 0 currentColor;letter-spacing:2.228px;">D=   Ø<span class="lc" style="transform:scaleY(0.85);transform-origin:0 13.41px">ms</span></div>
<div class="t" style="left:1329.22px;top:1007.23px;font-size:17.500px;line-height:17.500px;transform:scaleY(1.0497);color:#fff;font-weight:bold;text-shadow:0.4px 0 0 currentColor;letter-spacing:2.228px;">St<span class="lc" style="transform:scaleY(0.85);transform-origin:0 13.41px">ep</span>= 2.5</div>
<div class="t" style="left:1600.19px;top:826.23px;font-size:21.247px;line-height:21.247px;transform:scaleY(1.2147);color:#fff;font-weight:normal;text-shadow:0.7px 0 0 currentColor;">22.PLY</div>
<div class="t" style="left:1691.17px;top:832.28px;font-size:17.500px;line-height:17.500px;transform:scaleY(1.0237);color:#fff;font-weight:bold;text-shadow:0.4px 0 0 currentColor;letter-spacing:2.228px;">N<span class="lc" style="transform:scaleY(0.85);transform-origin:0 13.41px">m</span>= 1 S<span class="lc" style="transform:scaleY(0.85);transform-origin:0 13.41px">um</span>=     Ø</div>
<div class="t" style="left:1793.67px;top:860.68px;font-size:17.500px;line-height:17.500px;transform:scaleY(1.0237);color:#fff;font-weight:bold;text-shadow:0.4px 0 0 currentColor;letter-spacing:2.228px;">Y=-21.2</div>
<div class="t" style="left:1793.67px;top:885.58px;font-size:17.500px;line-height:17.500px;transform:scaleY(1.0237);color:#fff;font-weight:bold;text-shadow:0.4px 0 0 currentColor;letter-spacing:2.228px;">S=  Ø.Ø</div>
<div class="t" style="left:1793.67px;top:910.48px;font-size:17.500px;line-height:17.500px;transform:scaleY(1.0237);color:#fff;font-weight:bold;text-shadow:0.4px 0 0 currentColor;letter-spacing:2.228px;">L=    5</div>
<div class="t" style="left:1793.67px;top:935.38px;font-size:17.500px;line-height:17.500px;transform:scaleY(1.0237);color:#fff;font-weight:bold;text-shadow:0.4px 0 0 currentColor;letter-spacing:2.228px;">T=19ØØ<span class="lc" style="transform:scaleY(0.85);transform-origin:0 13.41px">ms</span></div>
<div class="t" style="left:1793.67px;top:960.28px;font-size:17.500px;line-height:17.500px;transform:scaleY(1.0237);color:#fff;font-weight:bold;text-shadow:0.4px 0 0 currentColor;letter-spacing:2.228px;">D=   Ø<span class="lc" style="transform:scaleY(0.85);transform-origin:0 13.41px">ms</span></div>
<div class="t" style="left:1646.97px;top:1007.23px;font-size:17.500px;line-height:17.500px;transform:scaleY(1.0497);color:#fff;font-weight:bold;text-shadow:0.4px 0 0 currentColor;letter-spacing:2.228px;">St<span class="lc" style="transform:scaleY(0.85);transform-origin:0 13.41px">ep</span>= 2.5</div>
<div class="t" style="left:34.52px;top:551.33px;font-size:17.500px;line-height:17.500px;transform:scaleY(1.0497);color:#fff;font-weight:bold;text-shadow:0.4px 0 0 currentColor;letter-spacing:2.228px;">P<span class="lc" style="transform:scaleY(0.85);transform-origin:0 13.41px">ro</span>fil<span class="lc" style="transform:scaleY(0.85);transform-origin:0 13.41px">e</span>: SE1 U-7Ø C<span class="lc" style="transform:scaleY(0.85);transform-origin:0 13.41px">yc</span>l<span class="lc" style="transform:scaleY(0.85);transform-origin:0 13.41px">e</span>: 2128  R<span class="lc" style="transform:scaleY(0.85);transform-origin:0 13.41px">eg</span>i<span class="lc" style="transform:scaleY(0.85);transform-origin:0 13.41px">me</span> 1 17.Ø4.2Ø26 15:41:57</div>
<div class="t" style="left:34.62px;top:1049.04px;font-size:17.500px;line-height:17.500px;transform:scaleY(1.0410);color:#fff;font-weight:bold;text-shadow:0.4px 0 0 currentColor;letter-spacing:2.228px;">G<span class="lc" style="transform:scaleY(0.85);transform-origin:0 13.41px">a</span>i<span class="lc" style="transform:scaleY(0.85);transform-origin:0 13.41px">n</span>: 3 I<span class="lc" style="transform:scaleY(0.85);transform-origin:0 13.41px">n</span>t<span class="lc" style="transform:scaleY(0.85);transform-origin:0 13.41px">ens</span>it<span class="lc" style="transform:scaleY(0.85);transform-origin:0 13.41px">y</span> 1Ø**9 <span class="lc" style="transform:scaleY(0.85);transform-origin:0 13.41px">pps</span>: A<span class="lc" style="transform:scaleY(0.85);transform-origin:0 13.41px">cce</span>l<span class="lc" style="transform:scaleY(0.85);transform-origin:0 13.41px">ere</span>t<span class="lc" style="transform:scaleY(0.85);transform-origin:0 13.41px">e</span>d=    Ø E<span class="lc" style="transform:scaleY(0.85);transform-origin:0 13.41px">x</span>t<span class="lc" style="transform:scaleY(0.85);transform-origin:0 13.41px">rac</span>t<span class="lc" style="transform:scaleY(0.85);transform-origin:0 13.41px">e</span>d=5Ø412Ø Effi<span class="lc" style="transform:scaleY(0.85);transform-origin:0 13.41px">c</span>t.=   163.Ø</div>
</body></html>
